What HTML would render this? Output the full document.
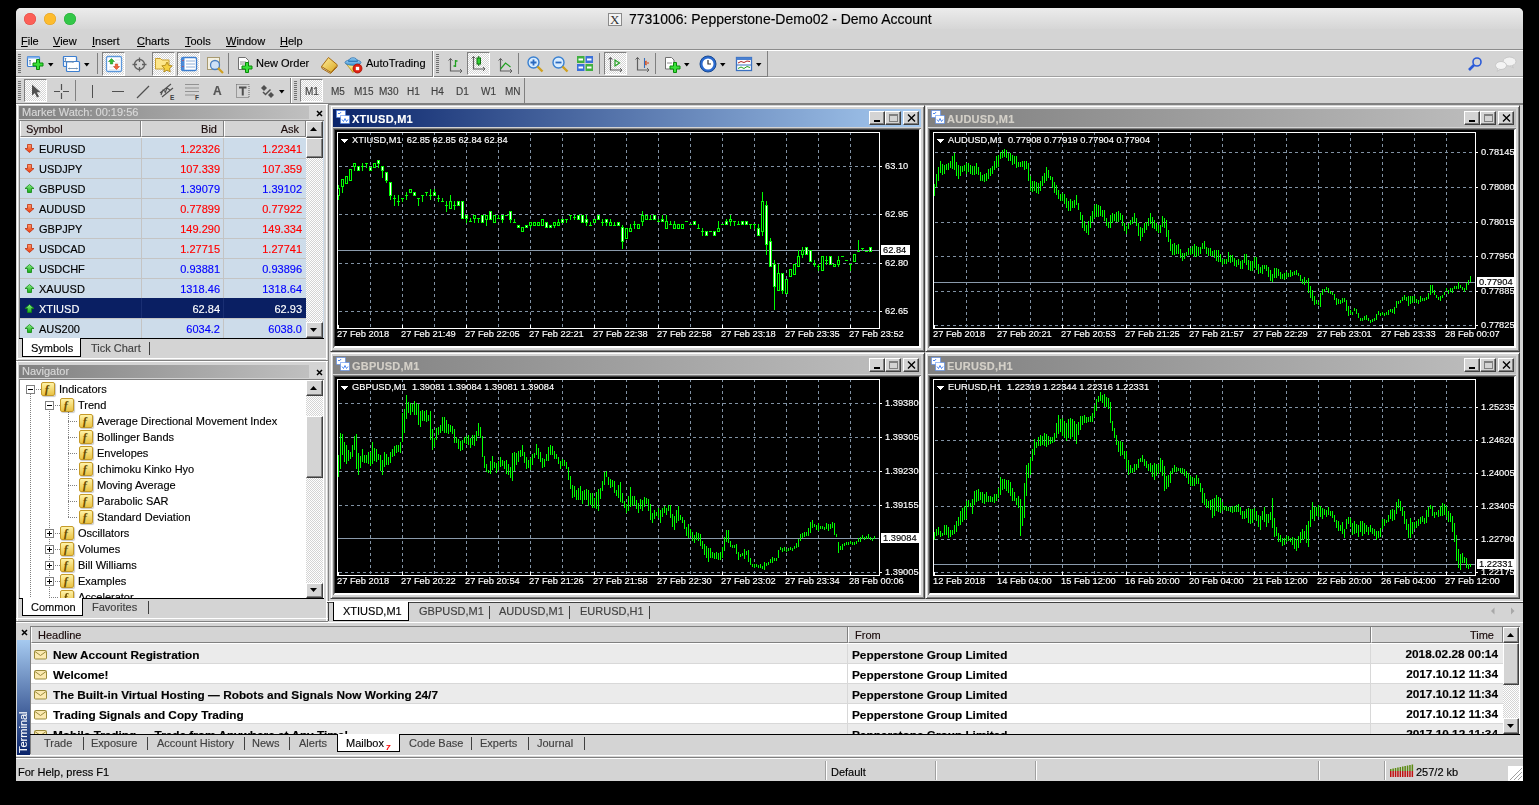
<!DOCTYPE html><html><head><meta charset="utf-8"><style>
*{margin:0;padding:0;box-sizing:border-box}
html,body{width:1539px;height:805px;overflow:hidden;background:#000}
body{position:relative;font-family:"Liberation Sans",sans-serif;font-size:11px;color:#000}
.t{position:absolute;white-space:nowrap;line-height:13px;will-change:transform;-webkit-text-stroke:0.15px currentColor}
.ct{position:absolute;white-space:nowrap;line-height:11px;font-size:9.3px;color:#fff;will-change:transform;-webkit-text-stroke:0.15px currentColor}
.u{text-decoration:underline}
svg{position:absolute;overflow:visible}
</style></head><body><div style="position:absolute;left:16px;top:8px;width:1507px;height:773px;background:#d4d4d4;border-radius:5px 5px 0 0"></div>
<div style="position:absolute;left:16px;top:8px;width:1507px;height:22px;background:linear-gradient(#ececec,#d6d6d6);border-radius:5px 5px 0 0;border-bottom:1px solid #ababab"></div>
<div style="position:absolute;left:24px;top:12.5px;width:12px;height:12px;background:#fc5f57;border-radius:50%;box-shadow:inset 0 0 0 0.5px #de4a42"></div>
<div style="position:absolute;left:44px;top:12.5px;width:12px;height:12px;background:#fdbc2e;border-radius:50%;box-shadow:inset 0 0 0 0.5px #de9f26"></div>
<div style="position:absolute;left:64px;top:12.5px;width:12px;height:12px;background:#33c748;border-radius:50%;box-shadow:inset 0 0 0 0.5px #27aa35"></div>
<div style="position:absolute;left:608px;top:13px;width:14px;height:13px;background:#f4f4f4;border:1px solid #8a8a8a"><div style="position:absolute;left:1px;top:-2px;font-family:Liberation Serif;font-size:13px;color:#333">X</div></div>
<div class="t" style="left:629px;top:10px;font-size:14px;line-height:18px;color:#000">7731006: Pepperstone-Demo02 - Demo Account</div>
<div style="position:absolute;left:16px;top:29px;width:1507px;height:20px;background:#d4d4d4"></div>
<div style="position:absolute;left:16px;top:49px;width:1507px;height:1px;background:#8c8c8c"></div>
<div style="position:absolute;left:16px;top:50px;width:1507px;height:1px;background:#fff"></div>
<div class="t" style="left:21px;top:35px;font-size:11px"><span class=u>F</span>ile</div>
<div class="t" style="left:53px;top:35px;font-size:11px"><span class=u>V</span>iew</div>
<div class="t" style="left:92px;top:35px;font-size:11px"><span class=u>I</span>nsert</div>
<div class="t" style="left:137px;top:35px;font-size:11px"><span class=u>C</span>harts</div>
<div class="t" style="left:185px;top:35px;font-size:11px"><span class=u>T</span>ools</div>
<div class="t" style="left:226px;top:35px;font-size:11px"><span class=u>W</span>indow</div>
<div class="t" style="left:280px;top:35px;font-size:11px"><span class=u>H</span>elp</div>
<div style="position:absolute;left:16px;top:76px;width:1507px;height:1px;background:#a0a0a0"></div>
<div style="position:absolute;left:16px;top:77px;width:1507px;height:1px;background:#fff"></div>
<div style="position:absolute;left:16px;top:103px;width:1507px;height:1px;background:#8c8c8c"></div>
<div style="position:absolute;left:16px;top:76px;width:752px;height:1px;background:#808080"></div>
<div style="position:absolute;left:16px;top:77px;width:753px;height:1px;background:#fff"></div>
<div style="position:absolute;left:432px;top:51px;width:1px;height:26px;background:#808080"></div>
<div style="position:absolute;left:433px;top:51px;width:1px;height:26px;background:#fff"></div>
<div style="position:absolute;left:767px;top:51px;width:1px;height:26px;background:#808080"></div>
<div style="position:absolute;left:16px;top:103px;width:1507px;height:1px;background:#808080"></div>
<div style="position:absolute;left:290px;top:78px;width:1px;height:25px;background:#808080"></div>
<div style="position:absolute;left:291px;top:78px;width:1px;height:25px;background:#fff"></div>
<div style="position:absolute;left:524px;top:78px;width:1px;height:25px;background:#808080"></div>
<div style="position:absolute;left:18px;top:54px;width:3px;height:19px;background-image:repeating-linear-gradient(#707070 0 1px,transparent 1px 2px)"></div>
<svg style="left:26px;top:55px" width="20" height="17" viewBox="0 0 20 17"><rect x="1.5" y="1.5" width="12" height="10" rx="1" fill="#fff" stroke="#3d7fd0" stroke-width="1.2"/><rect x="1.5" y="1.5" width="12" height="2" fill="#7fb0ee"/><path d="M4 5v5M3 6l1-1 1 1" stroke="#6a8cb0" fill="none"/><path d="M10.5 4.5h3v3.5h3.5v3h-3.5v3.5h-3v-3.5h-3.5v-3h3.5z" fill="#3ae03a" stroke="#0a8a0a" stroke-width="1" stroke-linejoin="miter"/></svg>
<svg style="left:48px;top:63px" width="6" height="4"><path d="M0 0H5.5L2.75 3.5Z" fill="#000"/></svg>
<svg style="left:62px;top:55px" width="20" height="18" viewBox="0 0 20 18"><rect x="1.5" y="1.5" width="13" height="10" rx="1" fill="#fff" stroke="#3d7fd0" stroke-width="1.2"/><rect x="4.5" y="6.5" width="13" height="10" rx="1" fill="#fff" stroke="#3d7fd0" stroke-width="1.2"/><rect x="1.5" y="1.5" width="13" height="5" rx="1" fill="#fff" stroke="#3d7fd0" stroke-width="1.2" stroke-dasharray="0"/><path d="M3.5 3v4M3 4l.5-1 .5 1M3.5 7h8M10.5 6.5l1 .5-1 .5M6.5 13.5h9M7.5 13l-1 .5 1 .5M14.5 13l1 .5-1 .5" stroke="#6a8cb0" fill="none" stroke-width="0.9"/></svg>
<svg style="left:84px;top:63px" width="6" height="4"><path d="M0 0H5.5L2.75 3.5Z" fill="#000"/></svg>
<div style="position:absolute;left:97px;top:53px;width:1px;height:21px;background:#808080"></div>
<div style="position:absolute;left:102px;top:52px;width:23px;height:24px;border-top:1px solid #808080;border-left:1px solid #808080;border-right:1px solid #fff;border-bottom:1px solid #fff;background-color:#eee;background-image:repeating-conic-gradient(#fff 0 25%,#d4d4d4 0 50%);background-size:2px 2px"></div>
<svg style="left:105px;top:55px" width="18" height="18" viewBox="0 0 18 18"><rect x="1.5" y="1.5" width="15" height="15" rx="1.5" fill="#fff" stroke="#5c98dc" stroke-width="1.3"/><path d="M10 5h5M10 8h5M4 12h11M4 14.5h11" stroke="#dde4ec" stroke-width="0.8"/><path d="M6.5 3.5l3 3h-1.8v2.5h-2.4v-2.5h-1.8z" fill="#30c030" stroke="#128012" stroke-width="0.5"/><path d="M11.5 14.5l3-3h-1.8v-2.5h-2.4v2.5h-1.8z" fill="#f06838" stroke="#c03010" stroke-width="0.5"/></svg>
<svg style="left:132px;top:57px" width="15" height="15" viewBox="0 0 15 15"><circle cx="7.5" cy="7.5" r="5" fill="none" stroke="#606060" stroke-width="1.3"/><path d="M7.5 0.5v4.5M7.5 10v4.5M0.5 7.5h4.5M10 7.5h4.5" stroke="#606060" stroke-width="1.3"/></svg>
<div style="position:absolute;left:152px;top:52px;width:23px;height:24px;border-top:1px solid #808080;border-left:1px solid #808080;border-right:1px solid #fff;border-bottom:1px solid #fff;background-color:#eee;background-image:repeating-conic-gradient(#fff 0 25%,#d4d4d4 0 50%);background-size:2px 2px"></div>
<svg style="left:154px;top:55px" width="20" height="19" viewBox="0 0 20 19"><path d="M1.5 3.5h5l1.5 1.5h7v9h-13.5z" fill="#fde68a" stroke="#c9a030"/><path d="M13 7l1.6 3.3 3.6.5-2.6 2.5.6 3.6-3.2-1.7-3.2 1.7.6-3.6-2.6-2.5 3.6-.5z" fill="#f5d040" stroke="#a88010" stroke-width="0.8"/></svg>
<div style="position:absolute;left:177px;top:52px;width:23px;height:24px;border-top:1px solid #808080;border-left:1px solid #808080;border-right:1px solid #fff;border-bottom:1px solid #fff;background-color:#eee;background-image:repeating-conic-gradient(#fff 0 25%,#d4d4d4 0 50%);background-size:2px 2px"></div>
<svg style="left:180px;top:56px" width="18" height="16" viewBox="0 0 18 16"><rect x="1.5" y="1.5" width="15" height="13" rx="1.5" fill="#fff" stroke="#3d7fd0" stroke-width="1.3"/><rect x="1.5" y="1.5" width="3" height="13" fill="#4a8ad8"/><path d="M6 5h9M6 8h9M6 11h9" stroke="#8fb0d8"/><path d="M3 4v1M3 10v1" stroke="#e03030"/></svg>
<svg style="left:206px;top:56px" width="19" height="19" viewBox="0 0 19 19"><rect x="1.5" y="1.5" width="12" height="12" fill="#f4f0e0" stroke="#a89a70"/><circle cx="9" cy="9" r="4.5" fill="#cfe2f6" stroke="#4a80c0" stroke-width="1.3"/><path d="M12 12l5 5" stroke="#d0a020" stroke-width="2.2"/></svg>
<div style="position:absolute;left:228px;top:53px;width:1px;height:21px;background:#808080"></div>
<svg style="left:237px;top:56px" width="19" height="19" viewBox="0 0 19 19"><path d="M1.5 1.5h7l3 3v9h-10z" fill="#fff" stroke="#707070"/><path d="M3 6h6M3 8h6" stroke="#909090"/><path d="M8.5 6.5h3v3.5h3.5v3h-3.5v3.5h-3v-3.5h-3.5v-3h3.5z" fill="#3ae03a" stroke="#0a8a0a" stroke-width="1" stroke-linejoin="miter"/></svg>
<div class="t" style="left:256px;top:57px;font-size:11px">New Order</div>
<svg style="left:320px;top:56px" width="19" height="18" viewBox="0 0 19 18"><defs><linearGradient id="bk" x1="0" y1="0" x2="1" y2="1"><stop offset="0" stop-color="#fff0a0"/><stop offset="1" stop-color="#d9a41c"/></linearGradient></defs><path d="M1.5 10.5L8.5 1.5L17.5 9L11 16.5Z" fill="url(#bk)" stroke="#a86c10"/><path d="M1.5 10.5L2 12.5L10.5 17.5L17.5 10.5" fill="none" stroke="#a86c10"/></svg>
<svg style="left:344px;top:55px" width="19" height="19" viewBox="0 0 19 19"><defs><linearGradient id="hat" x1="0" y1="0" x2="0" y2="1"><stop offset="0" stop-color="#a8d8f8"/><stop offset="1" stop-color="#3a90d0"/></linearGradient><linearGradient id="fun" x1="0" y1="0" x2="0" y2="1"><stop offset="0" stop-color="#fff4a0"/><stop offset="1" stop-color="#e8c030"/></linearGradient></defs><path d="M2 8.5L9 17.5L16 8.5Z" fill="url(#fun)" stroke="#b89020" stroke-width="0.8"/><ellipse cx="9" cy="7.5" rx="8" ry="2.8" fill="url(#hat)" stroke="#2a70b0" stroke-width="0.8"/><path d="M4.5 6.5C4.5 1.5 13.5 1.5 13.5 6.5Z" fill="url(#hat)" stroke="#2a70b0" stroke-width="0.8"/><circle cx="13.5" cy="13.5" r="4.5" fill="#e02010" stroke="#a01008" stroke-width="0.8"/><rect x="11.8" y="11.8" width="3.4" height="3.4" fill="#fff"/></svg>
<div class="t" style="left:366px;top:57px;font-size:11px">AutoTrading</div>
<div style="position:absolute;left:436px;top:54px;width:3px;height:19px;background-image:repeating-linear-gradient(#707070 0 1px,transparent 1px 2px)"></div>
<svg style="left:447px;top:57px" width="16" height="16" viewBox="0 0 16 16"><path d="M3.5 1.5v12.5h11.5" fill="none" stroke="#606060" stroke-width="1.2"/><path d="M1.5 3.5l2-2 2 2M13 12l2 2-2 2" fill="none" stroke="#606060"/><path d="M8.5 3v7M8.5 9h-2M8.5 4h2" stroke="#20a020" stroke-width="1.3"/></svg>
<div style="position:absolute;left:467px;top:52px;width:23px;height:23px;border-top:1px solid #808080;border-left:1px solid #808080;border-right:1px solid #fff;border-bottom:1px solid #fff;background-color:#eee;background-image:repeating-conic-gradient(#fff 0 25%,#d4d4d4 0 50%);background-size:2px 2px"></div>
<svg style="left:470px;top:55px" width="16" height="17" viewBox="0 0 16 17"><path d="M3.5 1.5v12.5h11.5" fill="none" stroke="#606060" stroke-width="1.2"/><path d="M1.5 3.5l2-2 2 2M13 12l2 2-2 2" fill="none" stroke="#606060"/><rect x="7" y="3" width="3.5" height="6" fill="#30d030" stroke="#107010"/><path d="M8.75 1v2M8.75 9v2" stroke="#107010"/></svg>
<svg style="left:497px;top:57px" width="16" height="16" viewBox="0 0 16 16"><path d="M3.5 1.5v12.5h11.5" fill="none" stroke="#606060" stroke-width="1.2"/><path d="M1.5 3.5l2-2 2 2M13 12l2 2-2 2" fill="none" stroke="#606060"/><path d="M3.5 12l5-6 5 4" fill="none" stroke="#20a020" stroke-width="1.2"/></svg>
<div style="position:absolute;left:518px;top:53px;width:1px;height:21px;background:#808080"></div>
<svg style="left:527px;top:56px" width="17" height="17" viewBox="0 0 17 17"><circle cx="6.5" cy="6.5" r="5.5" fill="#d8ecff" stroke="#3a80d0" stroke-width="1.4"/><path d="M10.5 10.5l5 5" stroke="#d0a020" stroke-width="2.4"/><path d="M3.5 6.5h6M6.5 3.5v6" stroke="#2a6ac0" stroke-width="1.8"/></svg>
<svg style="left:552px;top:56px" width="17" height="17" viewBox="0 0 17 17"><circle cx="6.5" cy="6.5" r="5.5" fill="#d8ecff" stroke="#3a80d0" stroke-width="1.4"/><path d="M10.5 10.5l5 5" stroke="#d0a020" stroke-width="2.4"/><path d="M3.5 6.5h6" stroke="#2a6ac0" stroke-width="1.8"/></svg>
<svg style="left:576px;top:55px" width="18" height="17" viewBox="0 0 18 17"><rect x="1" y="1" width="7.5" height="7" fill="#40b040"/><rect x="9.5" y="1" width="7.5" height="7" fill="#3a70d8"/><rect x="1" y="9" width="7.5" height="7" fill="#3a70d8"/><rect x="9.5" y="9" width="7.5" height="7" fill="#40b040"/><path d="M2.5 4.5h4.5M11 4.5h4.5M2.5 12.5h4.5M11 12.5h4.5" stroke="#fff" stroke-width="2"/></svg>
<div style="position:absolute;left:599px;top:53px;width:1px;height:21px;background:#808080"></div>
<div style="position:absolute;left:604px;top:52px;width:23px;height:23px;border-top:1px solid #808080;border-left:1px solid #808080;border-right:1px solid #fff;border-bottom:1px solid #fff;background-color:#eee;background-image:repeating-conic-gradient(#fff 0 25%,#d4d4d4 0 50%);background-size:2px 2px"></div>
<svg style="left:607px;top:56px" width="16" height="16" viewBox="0 0 16 16"><path d="M3.5 1.5v12.5h11.5" fill="none" stroke="#606060" stroke-width="1.2"/><path d="M1.5 3.5l2-2 2 2M13 12l2 2-2 2" fill="none" stroke="#606060"/><path d="M8 4v6l4.5-3z" fill="none" stroke="#20a020" stroke-width="1.2"/></svg>
<svg style="left:634px;top:56px" width="16" height="16" viewBox="0 0 16 16"><path d="M3.5 1.5v12.5h11.5" fill="none" stroke="#606060" stroke-width="1.2"/><path d="M1.5 3.5l2-2 2 2M13 12l2 2-2 2" fill="none" stroke="#606060"/><path d="M10.5 2v10M15 7h-3M12.5 5l-2 2 2 2" stroke="#d04010" fill="none" stroke-width="1.1"/><path d="M10.5 2v10" stroke="#3070c0"/></svg>
<div style="position:absolute;left:655px;top:53px;width:1px;height:21px;background:#808080"></div>
<svg style="left:664px;top:56px" width="19" height="19" viewBox="0 0 19 19"><path d="M1.5 1.5h6l2.5 2.5v9h-8.5z" fill="#fff" stroke="#707070"/><path d="M3 7h5" stroke="#909090"/><path d="M9.5 6.5h3v3.5h3.5v3h-3.5v3.5h-3v-3.5h-3.5v-3h3.5z" fill="#3ae03a" stroke="#0a8a0a" stroke-width="1" stroke-linejoin="miter"/></svg>
<svg style="left:684px;top:63px" width="6" height="4"><path d="M0 0H5.5L2.75 3.5Z" fill="#000"/></svg>
<svg style="left:699px;top:55px" width="18" height="18" viewBox="0 0 18 18"><circle cx="9" cy="9" r="8" fill="#2a6ad0" stroke="#1a4a90"/><circle cx="9" cy="9" r="5.5" fill="#fff"/><path d="M9 5v4h3" stroke="#333" fill="none" stroke-width="1.2"/></svg>
<svg style="left:720px;top:63px" width="6" height="4"><path d="M0 0H5.5L2.75 3.5Z" fill="#000"/></svg>
<svg style="left:735px;top:56px" width="18" height="16" viewBox="0 0 18 16"><rect x="1.5" y="1.5" width="15" height="13" fill="#fff" stroke="#3a70c0" stroke-width="1.3"/><rect x="1.5" y="1.5" width="15" height="2.5" fill="#4a80d0"/><path d="M1.5 9h15" stroke="#3a70c0"/><path d="M3 7l3-1.5 3 1 3-1.5 3 .5" stroke="#b02020" fill="none"/><path d="M3 12.5l3-1.5 3 1.5 3-2 3 1" stroke="#20a020" fill="none"/></svg>
<svg style="left:756px;top:63px" width="6" height="4"><path d="M0 0H5.5L2.75 3.5Z" fill="#000"/></svg>
<svg style="left:1467px;top:56px" width="16" height="16" viewBox="0 0 16 16"><circle cx="10" cy="6" r="4" fill="none" stroke="#2a5ad8" stroke-width="1.6"/><path d="M7 9l-5 5" stroke="#2a5ad8" stroke-width="2.6"/></svg>
<svg style="left:1494px;top:56px" width="24" height="16" viewBox="0 0 24 16"><ellipse cx="15.5" cy="5.5" rx="6.5" ry="4.5" fill="#f2f2f2" stroke="#c8c8c8"/><path d="M18 9.5l1.5 2.5-3.5-2" fill="#f2f2f2" stroke="#c8c8c8"/><ellipse cx="7" cy="9.5" rx="5.5" ry="4" fill="#f4f4f4" stroke="#c8c8c8"/><path d="M4 13l-1 2.5 3-2" fill="#f4f4f4" stroke="#c8c8c8"/></svg>
<div style="position:absolute;left:18px;top:81px;width:3px;height:19px;background-image:repeating-linear-gradient(#707070 0 1px,transparent 1px 2px)"></div>
<div style="position:absolute;left:24px;top:79px;width:23px;height:23px;border-top:1px solid #808080;border-left:1px solid #808080;border-right:1px solid #fff;border-bottom:1px solid #fff;background-color:#eee;background-image:repeating-conic-gradient(#fff 0 25%,#d4d4d4 0 50%);background-size:2px 2px"></div>
<svg style="left:30px;top:83px" width="12" height="16" viewBox="0 0 12 16"><path d="M2 1.5v11l2.8-2.5 2.2 4.5 2-1-2.2-4.3h3.8z" fill="#505050"/></svg>
<svg style="left:54px;top:84px" width="16" height="16" viewBox="0 0 16 16"><path d="M7.5 0v6M7.5 9v6M0 7.5h6M9 7.5h6" stroke="#505050" stroke-width="1.2"/></svg>
<div style="position:absolute;left:75px;top:80px;width:1px;height:21px;background:#808080"></div>
<div style="position:absolute;left:92px;top:85px;width:1px;height:13px;background:#505050"></div>
<div style="position:absolute;left:112px;top:91px;width:12px;height:1px;background:#505050"></div>
<svg style="left:136px;top:85px" width="14" height="14" viewBox="0 0 14 14"><path d="M1 13L13 1" stroke="#505050" stroke-width="1.2"/></svg>
<svg style="left:159px;top:83px" width="16" height="17" viewBox="0 0 16 17"><path d="M1 10L12 1M3 14L14 5M2 12l2-5 3 2M6 10l2-5 3 2" stroke="#505050" fill="none" stroke-width="1.1"/><text x="11" y="16.5" font-family="Liberation Sans" font-weight="bold" font-size="6.5" fill="#404040">E</text></svg>
<svg style="left:185px;top:83px" width="16" height="17" viewBox="0 0 16 17"><path d="M0.5 1.5h13M0.5 5h13M0.5 8.5h13M0.5 12h9" stroke="#505050" stroke-dasharray="1 1"/><text x="10" y="16.5" font-family="Liberation Sans" font-weight="bold" font-size="6.5" fill="#404040">F</text></svg>
<div class="t" style="left:213px;top:85px;font-size:12px;font-weight:bold;color:#555;line-height:12px">A</div>
<svg style="left:236px;top:84px" width="14" height="15" viewBox="0 0 14 15"><rect x="0.5" y="0.5" width="12.5" height="13" fill="none" stroke="#606060" stroke-dasharray="1 1"/><path d="M3 3.5h7.5M6.75 3.5v8" stroke="#505050" stroke-width="2"/></svg>
<svg style="left:260px;top:84px" width="16" height="15" viewBox="0 0 16 15"><path d="M4 1l3 3-3 3-3-3z" fill="#505050"/><path d="M11 8l3 3-3 3-3-3z" fill="#505050"/><path d="M3 8l2.5 2.5 5-5" stroke="#505050" fill="none" stroke-width="1.5"/></svg>
<svg style="left:279px;top:90px" width="6" height="4"><path d="M0 0H5.5L2.75 3.5Z" fill="#000"/></svg>
<div style="position:absolute;left:294px;top:81px;width:3px;height:19px;background-image:repeating-linear-gradient(#707070 0 1px,transparent 1px 2px)"></div>
<div style="position:absolute;left:300px;top:79px;width:23px;height:23px;border-top:1px solid #808080;border-left:1px solid #808080;border-right:1px solid #fff;border-bottom:1px solid #fff;background-color:#eee;background-image:repeating-conic-gradient(#fff 0 25%,#d4d4d4 0 50%);background-size:2px 2px"></div>
<div class="t" style="left:305px;top:85px;color:#404040;font-size:10px">M1</div>
<div class="t" style="left:331px;top:85px;color:#404040;font-size:10px">M5</div>
<div class="t" style="left:354px;top:85px;color:#404040;font-size:10px">M15</div>
<div class="t" style="left:379px;top:85px;color:#404040;font-size:10px">M30</div>
<div class="t" style="left:407px;top:85px;color:#404040;font-size:10px">H1</div>
<div class="t" style="left:431px;top:85px;color:#404040;font-size:10px">H4</div>
<div class="t" style="left:456px;top:85px;color:#404040;font-size:10px">D1</div>
<div class="t" style="left:481px;top:85px;color:#404040;font-size:10px">W1</div>
<div class="t" style="left:505px;top:85px;color:#404040;font-size:10px">MN</div>
<div style="position:absolute;left:17px;top:104px;width:1px;height:517px;background:#fff"></div>
<div style="position:absolute;left:16px;top:104px;width:312px;height:1px;background:#fff"></div>
<div style="position:absolute;left:326px;top:104px;width:1px;height:517px;background:#fff"></div>
<div style="position:absolute;left:19px;top:106px;width:290px;height:13px;background:linear-gradient(90deg,#808080,#c0c0c0)"></div>
<div class="t" style="left:22px;top:106px;color:#d8d8d8;font-size:11px;line-height:13px">Market Watch: 00:19:56</div>
<svg style="left:316px;top:110px" width="7" height="7"><path d="M1 1L6 6M6 1L1 6" stroke="#000" stroke-width="1.5"/></svg>
<div style="position:absolute;left:19px;top:120px;width:305px;height:218px;background:#cddcea;border-top:1px solid #808080;border-left:1px solid #808080"></div>
<div style="position:absolute;left:20px;top:121px;width:121px;height:16px;background:#d4d4d4;border-left:1px solid #fff;border-right:1px solid #808080;border-bottom:1px solid #808080"></div>
<div style="position:absolute;left:141px;top:121px;width:83px;height:16px;background:#d4d4d4;border-left:1px solid #fff;border-right:1px solid #808080;border-bottom:1px solid #808080"></div>
<div style="position:absolute;left:224px;top:121px;width:82px;height:16px;background:#d4d4d4;border-left:1px solid #fff;border-right:1px solid #808080;border-bottom:1px solid #808080"></div>
<div style="position:absolute;left:20px;top:137px;width:286px;height:1px;background:#fff"></div>
<div class="t" style="left:26px;top:123px;color:#1a0a0a">Symbol</div>
<div class="t" style="left:141px;top:123px;width:76px;text-align:right;color:#1a0a0a">Bid</div>
<div class="t" style="left:224px;top:123px;width:75px;text-align:right;color:#1a0a0a">Ask</div>
<div style="position:absolute;left:20px;top:158px;width:286px;height:1px;background:#c4c4c4"></div>
<div style="position:absolute;left:141px;top:138px;width:1px;height:20px;background:#c4c4c4"></div>
<div style="position:absolute;left:223px;top:138px;width:1px;height:20px;background:#c4c4c4"></div>
<div class="t" style="left:39px;top:143px;color:#000;font-size:11px">EURUSD</div>
<div class="t" style="left:141px;top:143px;width:79px;text-align:right;color:#ff0000">1.22326</div>
<div class="t" style="left:223px;top:143px;width:79px;text-align:right;color:#ff0000">1.22341</div>
<svg style="left:24px;top:144px" width="11" height="10"><defs><linearGradient id="ra0" x1="0" y1="0" x2="0" y2="1"><stop offset="0" stop-color="#ffa070"/><stop offset="1" stop-color="#e83a10"/></linearGradient></defs><path d="M5.5 8.5L10 4.5H7.5V0.5H3.5V4.5H1Z" fill="url(#ra0)" stroke="#c03010" stroke-width="0.8"/></svg>
<div style="position:absolute;left:20px;top:178px;width:286px;height:1px;background:#c4c4c4"></div>
<div style="position:absolute;left:141px;top:158px;width:1px;height:20px;background:#c4c4c4"></div>
<div style="position:absolute;left:223px;top:158px;width:1px;height:20px;background:#c4c4c4"></div>
<div class="t" style="left:39px;top:163px;color:#000;font-size:11px">USDJPY</div>
<div class="t" style="left:141px;top:163px;width:79px;text-align:right;color:#ff0000">107.339</div>
<div class="t" style="left:223px;top:163px;width:79px;text-align:right;color:#ff0000">107.359</div>
<svg style="left:24px;top:164px" width="11" height="10"><defs><linearGradient id="ra1" x1="0" y1="0" x2="0" y2="1"><stop offset="0" stop-color="#ffa070"/><stop offset="1" stop-color="#e83a10"/></linearGradient></defs><path d="M5.5 8.5L10 4.5H7.5V0.5H3.5V4.5H1Z" fill="url(#ra1)" stroke="#c03010" stroke-width="0.8"/></svg>
<div style="position:absolute;left:20px;top:198px;width:286px;height:1px;background:#c4c4c4"></div>
<div style="position:absolute;left:141px;top:178px;width:1px;height:20px;background:#c4c4c4"></div>
<div style="position:absolute;left:223px;top:178px;width:1px;height:20px;background:#c4c4c4"></div>
<div class="t" style="left:39px;top:183px;color:#000;font-size:11px">GBPUSD</div>
<div class="t" style="left:141px;top:183px;width:79px;text-align:right;color:#0000ff">1.39079</div>
<div class="t" style="left:223px;top:183px;width:79px;text-align:right;color:#0000ff">1.39102</div>
<svg style="left:24px;top:184px" width="11" height="10"><defs><linearGradient id="ga2" x1="0" y1="0" x2="0" y2="1"><stop offset="0" stop-color="#8cf08c"/><stop offset="1" stop-color="#18a818"/></linearGradient></defs><path d="M5.5 0.5L10 4.5H7.5V8.5H3.5V4.5H1Z" fill="url(#ga2)" stroke="#108a10" stroke-width="0.8"/></svg>
<div style="position:absolute;left:20px;top:218px;width:286px;height:1px;background:#c4c4c4"></div>
<div style="position:absolute;left:141px;top:198px;width:1px;height:20px;background:#c4c4c4"></div>
<div style="position:absolute;left:223px;top:198px;width:1px;height:20px;background:#c4c4c4"></div>
<div class="t" style="left:39px;top:203px;color:#000;font-size:11px">AUDUSD</div>
<div class="t" style="left:141px;top:203px;width:79px;text-align:right;color:#ff0000">0.77899</div>
<div class="t" style="left:223px;top:203px;width:79px;text-align:right;color:#ff0000">0.77922</div>
<svg style="left:24px;top:204px" width="11" height="10"><defs><linearGradient id="ra3" x1="0" y1="0" x2="0" y2="1"><stop offset="0" stop-color="#ffa070"/><stop offset="1" stop-color="#e83a10"/></linearGradient></defs><path d="M5.5 8.5L10 4.5H7.5V0.5H3.5V4.5H1Z" fill="url(#ra3)" stroke="#c03010" stroke-width="0.8"/></svg>
<div style="position:absolute;left:20px;top:238px;width:286px;height:1px;background:#c4c4c4"></div>
<div style="position:absolute;left:141px;top:218px;width:1px;height:20px;background:#c4c4c4"></div>
<div style="position:absolute;left:223px;top:218px;width:1px;height:20px;background:#c4c4c4"></div>
<div class="t" style="left:39px;top:223px;color:#000;font-size:11px">GBPJPY</div>
<div class="t" style="left:141px;top:223px;width:79px;text-align:right;color:#ff0000">149.290</div>
<div class="t" style="left:223px;top:223px;width:79px;text-align:right;color:#ff0000">149.334</div>
<svg style="left:24px;top:224px" width="11" height="10"><defs><linearGradient id="ra4" x1="0" y1="0" x2="0" y2="1"><stop offset="0" stop-color="#ffa070"/><stop offset="1" stop-color="#e83a10"/></linearGradient></defs><path d="M5.5 8.5L10 4.5H7.5V0.5H3.5V4.5H1Z" fill="url(#ra4)" stroke="#c03010" stroke-width="0.8"/></svg>
<div style="position:absolute;left:20px;top:258px;width:286px;height:1px;background:#c4c4c4"></div>
<div style="position:absolute;left:141px;top:238px;width:1px;height:20px;background:#c4c4c4"></div>
<div style="position:absolute;left:223px;top:238px;width:1px;height:20px;background:#c4c4c4"></div>
<div class="t" style="left:39px;top:243px;color:#000;font-size:11px">USDCAD</div>
<div class="t" style="left:141px;top:243px;width:79px;text-align:right;color:#ff0000">1.27715</div>
<div class="t" style="left:223px;top:243px;width:79px;text-align:right;color:#ff0000">1.27741</div>
<svg style="left:24px;top:244px" width="11" height="10"><defs><linearGradient id="ra5" x1="0" y1="0" x2="0" y2="1"><stop offset="0" stop-color="#ffa070"/><stop offset="1" stop-color="#e83a10"/></linearGradient></defs><path d="M5.5 8.5L10 4.5H7.5V0.5H3.5V4.5H1Z" fill="url(#ra5)" stroke="#c03010" stroke-width="0.8"/></svg>
<div style="position:absolute;left:20px;top:278px;width:286px;height:1px;background:#c4c4c4"></div>
<div style="position:absolute;left:141px;top:258px;width:1px;height:20px;background:#c4c4c4"></div>
<div style="position:absolute;left:223px;top:258px;width:1px;height:20px;background:#c4c4c4"></div>
<div class="t" style="left:39px;top:263px;color:#000;font-size:11px">USDCHF</div>
<div class="t" style="left:141px;top:263px;width:79px;text-align:right;color:#0000ff">0.93881</div>
<div class="t" style="left:223px;top:263px;width:79px;text-align:right;color:#0000ff">0.93896</div>
<svg style="left:24px;top:264px" width="11" height="10"><defs><linearGradient id="ga6" x1="0" y1="0" x2="0" y2="1"><stop offset="0" stop-color="#8cf08c"/><stop offset="1" stop-color="#18a818"/></linearGradient></defs><path d="M5.5 0.5L10 4.5H7.5V8.5H3.5V4.5H1Z" fill="url(#ga6)" stroke="#108a10" stroke-width="0.8"/></svg>
<div style="position:absolute;left:20px;top:298px;width:286px;height:1px;background:#c4c4c4"></div>
<div style="position:absolute;left:141px;top:278px;width:1px;height:20px;background:#c4c4c4"></div>
<div style="position:absolute;left:223px;top:278px;width:1px;height:20px;background:#c4c4c4"></div>
<div class="t" style="left:39px;top:283px;color:#000;font-size:11px">XAUUSD</div>
<div class="t" style="left:141px;top:283px;width:79px;text-align:right;color:#0000ff">1318.46</div>
<div class="t" style="left:223px;top:283px;width:79px;text-align:right;color:#0000ff">1318.64</div>
<svg style="left:24px;top:284px" width="11" height="10"><defs><linearGradient id="ga7" x1="0" y1="0" x2="0" y2="1"><stop offset="0" stop-color="#8cf08c"/><stop offset="1" stop-color="#18a818"/></linearGradient></defs><path d="M5.5 0.5L10 4.5H7.5V8.5H3.5V4.5H1Z" fill="url(#ga7)" stroke="#108a10" stroke-width="0.8"/></svg>
<div style="position:absolute;left:20px;top:298px;width:286px;height:20px;background:#0a1f63"></div>
<div style="position:absolute;left:20px;top:318px;width:286px;height:1px;background:#c4c4c4"></div>
<div style="position:absolute;left:141px;top:298px;width:1px;height:20px;background:#1a2f73"></div>
<div style="position:absolute;left:223px;top:298px;width:1px;height:20px;background:#1a2f73"></div>
<div class="t" style="left:39px;top:303px;color:#fff;font-size:11px">XTIUSD</div>
<div class="t" style="left:141px;top:303px;width:79px;text-align:right;color:#fff">62.84</div>
<div class="t" style="left:223px;top:303px;width:79px;text-align:right;color:#fff">62.93</div>
<svg style="left:24px;top:304px" width="11" height="10"><defs><linearGradient id="ga8" x1="0" y1="0" x2="0" y2="1"><stop offset="0" stop-color="#8cf08c"/><stop offset="1" stop-color="#18a818"/></linearGradient></defs><path d="M5.5 0.5L10 4.5H7.5V8.5H3.5V4.5H1Z" fill="url(#ga8)" stroke="#108a10" stroke-width="0.8"/></svg>
<div style="position:absolute;left:20px;top:338px;width:286px;height:1px;background:#c4c4c4"></div>
<div style="position:absolute;left:141px;top:318px;width:1px;height:20px;background:#c4c4c4"></div>
<div style="position:absolute;left:223px;top:318px;width:1px;height:20px;background:#c4c4c4"></div>
<div class="t" style="left:39px;top:323px;color:#000;font-size:11px">AUS200</div>
<div class="t" style="left:141px;top:323px;width:79px;text-align:right;color:#0000ff">6034.2</div>
<div class="t" style="left:223px;top:323px;width:79px;text-align:right;color:#0000ff">6038.0</div>
<svg style="left:24px;top:324px" width="11" height="10"><defs><linearGradient id="ga9" x1="0" y1="0" x2="0" y2="1"><stop offset="0" stop-color="#8cf08c"/><stop offset="1" stop-color="#18a818"/></linearGradient></defs><path d="M5.5 0.5L10 4.5H7.5V8.5H3.5V4.5H1Z" fill="url(#ga9)" stroke="#108a10" stroke-width="0.8"/></svg>
<div style="position:absolute;left:306px;top:121px;width:17px;height:217px;background-color:#e8e8e8;background-image:repeating-conic-gradient(#fff 0 25%,#d4d4d4 0 50%);background-size:2px 2px"></div>
<div style="position:absolute;left:306px;top:121px;width:17px;height:17px;background:#d4d4d4;border-top:1px solid #fff;border-left:1px solid #fff;border-right:1px solid #404040;border-bottom:1px solid #404040;box-shadow:inset -1px -1px 0 #808080"></div>
<svg style="left:310px;top:127px" width="8" height="5"><path d="M3.5 0L7 4H0Z" fill="#000"/></svg>
<div style="position:absolute;left:306px;top:138px;width:17px;height:20px;background:#d4d4d4;border-top:1px solid #fff;border-left:1px solid #fff;border-right:1px solid #404040;border-bottom:1px solid #404040;box-shadow:inset -1px -1px 0 #808080"></div>
<div style="position:absolute;left:306px;top:322px;width:17px;height:16px;background:#d4d4d4;border-top:1px solid #fff;border-left:1px solid #fff;border-right:1px solid #404040;border-bottom:1px solid #404040;box-shadow:inset -1px -1px 0 #808080"></div>
<svg style="left:310px;top:328px" width="8" height="5"><path d="M0 0H7L3.5 4Z" fill="#000"/></svg>
<div style="position:absolute;left:19px;top:338px;width:305px;height:1px;background:#000"></div>
<div style="position:absolute;left:22px;top:338px;width:59px;height:19px;background:#fff;border:1px solid #000;border-top:none"></div>
<div class="t" style="left:31px;top:342px;">Symbols</div>
<div class="t" style="left:91px;top:342px;color:#404040">Tick Chart</div>
<div style="position:absolute;left:149px;top:342px;width:1px;height:13px;background:#404040"></div>
<div style="position:absolute;left:17px;top:358px;width:310px;height:1px;background:#fff"></div>
<div style="position:absolute;left:16px;top:360px;width:312px;height:1px;background:#808080"></div>
<div style="position:absolute;left:16px;top:361px;width:312px;height:1px;background:#fff"></div>
<div style="position:absolute;left:19px;top:365px;width:290px;height:13px;background:linear-gradient(90deg,#808080,#c0c0c0)"></div>
<div class="t" style="left:22px;top:365px;color:#d8d8d8;font-size:11px;line-height:13px">Navigator</div>
<svg style="left:316px;top:369px" width="7" height="7"><path d="M1 1L6 6M6 1L1 6" stroke="#000" stroke-width="1.5"/></svg>
<div style="position:absolute;left:19px;top:379px;width:305px;height:219px;background:#fff;border-top:1px solid #808080;border-left:1px solid #808080"></div>
<div style="position:absolute;left:30px;top:394px;width:1px;height:204px;background-image:repeating-linear-gradient(#808080 0 1px,transparent 1px 2px)"></div>
<div style="position:absolute;left:49px;top:411px;width:1px;height:187px;background-image:repeating-linear-gradient(#808080 0 1px,transparent 1px 2px)"></div>
<div style="position:absolute;left:68px;top:412px;width:1px;height:105px;background-image:repeating-linear-gradient(#808080 0 1px,transparent 1px 2px)"></div>
<div style="position:absolute;left:26px;top:385px;width:9px;height:9px;border:1px solid #808080;background:#fff"><div style="position:absolute;left:1px;top:3px;width:5px;height:1px;background:#000"></div></div>
<div style="position:absolute;left:36px;top:389px;width:5px;height:1px;background-image:repeating-linear-gradient(90deg,#808080 0 1px,transparent 1px 2px)"></div>
<div style="position:absolute;left:41px;top:382px;width:14px;height:14px;border-radius:2px;background:linear-gradient(#fff3a8,#e9c244);border:1px solid #c59a28;box-shadow:1px 1px 1px rgba(0,0,0,.22)"><div style="position:absolute;left:2px;top:-1px;font-family:Liberation Serif;font-style:italic;font-weight:bold;font-size:12px;line-height:14px;color:#6e5000">&#402;</div></div>
<div class="t" style="left:59px;top:383px;">Indicators</div>
<div style="position:absolute;left:45px;top:401px;width:9px;height:9px;border:1px solid #808080;background:#fff"><div style="position:absolute;left:1px;top:3px;width:5px;height:1px;background:#000"></div></div>
<div style="position:absolute;left:55px;top:405px;width:5px;height:1px;background-image:repeating-linear-gradient(90deg,#808080 0 1px,transparent 1px 2px)"></div>
<div style="position:absolute;left:60px;top:398px;width:14px;height:14px;border-radius:2px;background:linear-gradient(#fff3a8,#e9c244);border:1px solid #c59a28;box-shadow:1px 1px 1px rgba(0,0,0,.22)"><div style="position:absolute;left:2px;top:-1px;font-family:Liberation Serif;font-style:italic;font-weight:bold;font-size:12px;line-height:14px;color:#6e5000">&#402;</div></div>
<div class="t" style="left:78px;top:399px;">Trend</div>
<div style="position:absolute;left:68px;top:421px;width:10px;height:1px;background-image:repeating-linear-gradient(90deg,#808080 0 1px,transparent 1px 2px)"></div>
<div style="position:absolute;left:79px;top:414px;width:14px;height:14px;border-radius:2px;background:linear-gradient(#fff3a8,#e9c244);border:1px solid #c59a28;box-shadow:1px 1px 1px rgba(0,0,0,.22)"><div style="position:absolute;left:2px;top:-1px;font-family:Liberation Serif;font-style:italic;font-weight:bold;font-size:12px;line-height:14px;color:#6e5000">&#402;</div></div>
<div class="t" style="left:97px;top:415px;">Average Directional Movement Index</div>
<div style="position:absolute;left:68px;top:437px;width:10px;height:1px;background-image:repeating-linear-gradient(90deg,#808080 0 1px,transparent 1px 2px)"></div>
<div style="position:absolute;left:79px;top:430px;width:14px;height:14px;border-radius:2px;background:linear-gradient(#fff3a8,#e9c244);border:1px solid #c59a28;box-shadow:1px 1px 1px rgba(0,0,0,.22)"><div style="position:absolute;left:2px;top:-1px;font-family:Liberation Serif;font-style:italic;font-weight:bold;font-size:12px;line-height:14px;color:#6e5000">&#402;</div></div>
<div class="t" style="left:97px;top:431px;">Bollinger Bands</div>
<div style="position:absolute;left:68px;top:453px;width:10px;height:1px;background-image:repeating-linear-gradient(90deg,#808080 0 1px,transparent 1px 2px)"></div>
<div style="position:absolute;left:79px;top:446px;width:14px;height:14px;border-radius:2px;background:linear-gradient(#fff3a8,#e9c244);border:1px solid #c59a28;box-shadow:1px 1px 1px rgba(0,0,0,.22)"><div style="position:absolute;left:2px;top:-1px;font-family:Liberation Serif;font-style:italic;font-weight:bold;font-size:12px;line-height:14px;color:#6e5000">&#402;</div></div>
<div class="t" style="left:97px;top:447px;">Envelopes</div>
<div style="position:absolute;left:68px;top:469px;width:10px;height:1px;background-image:repeating-linear-gradient(90deg,#808080 0 1px,transparent 1px 2px)"></div>
<div style="position:absolute;left:79px;top:462px;width:14px;height:14px;border-radius:2px;background:linear-gradient(#fff3a8,#e9c244);border:1px solid #c59a28;box-shadow:1px 1px 1px rgba(0,0,0,.22)"><div style="position:absolute;left:2px;top:-1px;font-family:Liberation Serif;font-style:italic;font-weight:bold;font-size:12px;line-height:14px;color:#6e5000">&#402;</div></div>
<div class="t" style="left:97px;top:463px;">Ichimoku Kinko Hyo</div>
<div style="position:absolute;left:68px;top:485px;width:10px;height:1px;background-image:repeating-linear-gradient(90deg,#808080 0 1px,transparent 1px 2px)"></div>
<div style="position:absolute;left:79px;top:478px;width:14px;height:14px;border-radius:2px;background:linear-gradient(#fff3a8,#e9c244);border:1px solid #c59a28;box-shadow:1px 1px 1px rgba(0,0,0,.22)"><div style="position:absolute;left:2px;top:-1px;font-family:Liberation Serif;font-style:italic;font-weight:bold;font-size:12px;line-height:14px;color:#6e5000">&#402;</div></div>
<div class="t" style="left:97px;top:479px;">Moving Average</div>
<div style="position:absolute;left:68px;top:501px;width:10px;height:1px;background-image:repeating-linear-gradient(90deg,#808080 0 1px,transparent 1px 2px)"></div>
<div style="position:absolute;left:79px;top:494px;width:14px;height:14px;border-radius:2px;background:linear-gradient(#fff3a8,#e9c244);border:1px solid #c59a28;box-shadow:1px 1px 1px rgba(0,0,0,.22)"><div style="position:absolute;left:2px;top:-1px;font-family:Liberation Serif;font-style:italic;font-weight:bold;font-size:12px;line-height:14px;color:#6e5000">&#402;</div></div>
<div class="t" style="left:97px;top:495px;">Parabolic SAR</div>
<div style="position:absolute;left:68px;top:517px;width:10px;height:1px;background-image:repeating-linear-gradient(90deg,#808080 0 1px,transparent 1px 2px)"></div>
<div style="position:absolute;left:79px;top:510px;width:14px;height:14px;border-radius:2px;background:linear-gradient(#fff3a8,#e9c244);border:1px solid #c59a28;box-shadow:1px 1px 1px rgba(0,0,0,.22)"><div style="position:absolute;left:2px;top:-1px;font-family:Liberation Serif;font-style:italic;font-weight:bold;font-size:12px;line-height:14px;color:#6e5000">&#402;</div></div>
<div class="t" style="left:97px;top:511px;">Standard Deviation</div>
<div style="position:absolute;left:45px;top:529px;width:9px;height:9px;border:1px solid #808080;background:#fff"><div style="position:absolute;left:1px;top:3px;width:5px;height:1px;background:#000"></div><div style="position:absolute;left:3px;top:1px;width:1px;height:5px;background:#000"></div></div>
<div style="position:absolute;left:55px;top:533px;width:5px;height:1px;background-image:repeating-linear-gradient(90deg,#808080 0 1px,transparent 1px 2px)"></div>
<div style="position:absolute;left:60px;top:526px;width:14px;height:14px;border-radius:2px;background:linear-gradient(#fff3a8,#e9c244);border:1px solid #c59a28;box-shadow:1px 1px 1px rgba(0,0,0,.22)"><div style="position:absolute;left:2px;top:-1px;font-family:Liberation Serif;font-style:italic;font-weight:bold;font-size:12px;line-height:14px;color:#6e5000">&#402;</div></div>
<div class="t" style="left:78px;top:527px;">Oscillators</div>
<div style="position:absolute;left:45px;top:545px;width:9px;height:9px;border:1px solid #808080;background:#fff"><div style="position:absolute;left:1px;top:3px;width:5px;height:1px;background:#000"></div><div style="position:absolute;left:3px;top:1px;width:1px;height:5px;background:#000"></div></div>
<div style="position:absolute;left:55px;top:549px;width:5px;height:1px;background-image:repeating-linear-gradient(90deg,#808080 0 1px,transparent 1px 2px)"></div>
<div style="position:absolute;left:60px;top:542px;width:14px;height:14px;border-radius:2px;background:linear-gradient(#fff3a8,#e9c244);border:1px solid #c59a28;box-shadow:1px 1px 1px rgba(0,0,0,.22)"><div style="position:absolute;left:2px;top:-1px;font-family:Liberation Serif;font-style:italic;font-weight:bold;font-size:12px;line-height:14px;color:#6e5000">&#402;</div></div>
<div class="t" style="left:78px;top:543px;">Volumes</div>
<div style="position:absolute;left:45px;top:561px;width:9px;height:9px;border:1px solid #808080;background:#fff"><div style="position:absolute;left:1px;top:3px;width:5px;height:1px;background:#000"></div><div style="position:absolute;left:3px;top:1px;width:1px;height:5px;background:#000"></div></div>
<div style="position:absolute;left:55px;top:565px;width:5px;height:1px;background-image:repeating-linear-gradient(90deg,#808080 0 1px,transparent 1px 2px)"></div>
<div style="position:absolute;left:60px;top:558px;width:14px;height:14px;border-radius:2px;background:linear-gradient(#fff3a8,#e9c244);border:1px solid #c59a28;box-shadow:1px 1px 1px rgba(0,0,0,.22)"><div style="position:absolute;left:2px;top:-1px;font-family:Liberation Serif;font-style:italic;font-weight:bold;font-size:12px;line-height:14px;color:#6e5000">&#402;</div></div>
<div class="t" style="left:78px;top:559px;">Bill Williams</div>
<div style="position:absolute;left:45px;top:577px;width:9px;height:9px;border:1px solid #808080;background:#fff"><div style="position:absolute;left:1px;top:3px;width:5px;height:1px;background:#000"></div><div style="position:absolute;left:3px;top:1px;width:1px;height:5px;background:#000"></div></div>
<div style="position:absolute;left:55px;top:581px;width:5px;height:1px;background-image:repeating-linear-gradient(90deg,#808080 0 1px,transparent 1px 2px)"></div>
<div style="position:absolute;left:60px;top:574px;width:14px;height:14px;border-radius:2px;background:linear-gradient(#fff3a8,#e9c244);border:1px solid #c59a28;box-shadow:1px 1px 1px rgba(0,0,0,.22)"><div style="position:absolute;left:2px;top:-1px;font-family:Liberation Serif;font-style:italic;font-weight:bold;font-size:12px;line-height:14px;color:#6e5000">&#402;</div></div>
<div class="t" style="left:78px;top:575px;">Examples</div>
<div style="position:absolute;left:0;top:0;width:330px;height:598px;overflow:hidden">
<div style="position:absolute;left:49px;top:597px;width:10px;height:1px;background-image:repeating-linear-gradient(90deg,#808080 0 1px,transparent 1px 2px)"></div>
<div style="position:absolute;left:60px;top:590px;width:14px;height:14px;border-radius:2px;background:linear-gradient(#fff3a8,#e9c244);border:1px solid #c59a28;box-shadow:1px 1px 1px rgba(0,0,0,.22)"><div style="position:absolute;left:2px;top:-1px;font-family:Liberation Serif;font-style:italic;font-weight:bold;font-size:12px;line-height:14px;color:#6e5000">&#402;</div></div>
<div class="t" style="left:78px;top:591px;">Accelerator</div>
</div>
<div style="position:absolute;left:19px;top:598px;width:305px;height:1px;background:#000"></div>
<div style="position:absolute;left:306px;top:380px;width:17px;height:218px;background-color:#e8e8e8;background-image:repeating-conic-gradient(#fff 0 25%,#d4d4d4 0 50%);background-size:2px 2px"></div>
<div style="position:absolute;left:306px;top:380px;width:17px;height:16px;background:#d4d4d4;border-top:1px solid #fff;border-left:1px solid #fff;border-right:1px solid #404040;border-bottom:1px solid #404040;box-shadow:inset -1px -1px 0 #808080"></div>
<svg style="left:310px;top:386px" width="8" height="5"><path d="M3.5 0L7 4H0Z" fill="#000"/></svg>
<div style="position:absolute;left:306px;top:416px;width:17px;height:62px;background:#d4d4d4;border-top:1px solid #fff;border-left:1px solid #fff;border-right:1px solid #404040;border-bottom:1px solid #404040;box-shadow:inset -1px -1px 0 #808080"></div>
<div style="position:absolute;left:306px;top:583px;width:17px;height:15px;background:#d4d4d4;border-top:1px solid #fff;border-left:1px solid #fff;border-right:1px solid #404040;border-bottom:1px solid #404040;box-shadow:inset -1px -1px 0 #808080"></div>
<svg style="left:310px;top:588px" width="8" height="5"><path d="M0 0H7L3.5 4Z" fill="#000"/></svg>
<div style="position:absolute;left:22px;top:598px;width:61px;height:18px;background:#fff;border:1px solid #000;border-top:none"></div>
<div class="t" style="left:31px;top:601px;">Common</div>
<div class="t" style="left:92px;top:601px;color:#404040">Favorites</div>
<div style="position:absolute;left:148px;top:601px;width:1px;height:13px;background:#404040"></div>
<div style="position:absolute;left:17px;top:618px;width:310px;height:1px;background:#fff"></div>
<div style="position:absolute;left:328px;top:104px;width:1195px;height:497px;background:#d4d4d4"></div>
<div style="position:absolute;left:328px;top:104px;width:1px;height:497px;background:#808080"></div>
<div style="position:absolute;left:328px;top:104px;width:1195px;height:1px;background:#808080"></div>
<div style="position:absolute;left:330px;top:105px;width:595px;height:247px;background:#d4d4d4;border-top:1px solid #d4d4d4;border-left:1px solid #d4d4d4;border-right:1px solid #404040;border-bottom:1px solid #404040;box-shadow:inset 1px 1px 0 #fff,inset -1px -1px 0 #808080"></div>
<div style="position:absolute;left:333px;top:109px;width:588px;height:18px;background:linear-gradient(90deg,#0a246a,#a6caf0)"></div>
<svg style="left:336px;top:110px" width="15" height="15"><rect x="0.5" y="0.5" width="9" height="7" fill="#fff" stroke="#3a7af0" stroke-dasharray="1 1"/><rect x="4.5" y="5.5" width="9" height="8" fill="#fff" stroke="#3a7af0" stroke-dasharray="1 1"/><path d="M6 9.5l1.5 2 1.5-3 1.5 3 1.5-2" stroke="#3a7af0" fill="none" stroke-width="0.9"/><path d="M2 3.5h2l1-1.5" stroke="#3a7af0" fill="none" stroke-width="0.9"/></svg>
<div class="t" style="left:352px;top:111px;font-weight:bold;font-size:11px;letter-spacing:0.25px;line-height:16px;color:#fff">XTIUSD,M1</div>
<div style="position:absolute;left:869px;top:111px;width:16px;height:14px;background:#d4d4d4;border-top:1px solid #fff;border-left:1px solid #fff;border-right:1px solid #404040;border-bottom:1px solid #404040;box-shadow:inset -1px -1px 0 #808080"><div style="position:absolute;left:4px;top:8px;width:6px;height:2px;background:#000"></div></div>
<div style="position:absolute;left:885px;top:111px;width:16px;height:14px;background:#d4d4d4;border-top:1px solid #fff;border-left:1px solid #fff;border-right:1px solid #404040;border-bottom:1px solid #404040;box-shadow:inset -1px -1px 0 #808080"><div style="position:absolute;left:3px;top:2px;width:9px;height:8px;border:1px solid #808080;border-top-width:2px"></div></div>
<div style="position:absolute;left:903px;top:111px;width:16px;height:14px;background:#d4d4d4;border-top:1px solid #fff;border-left:1px solid #fff;border-right:1px solid #404040;border-bottom:1px solid #404040;box-shadow:inset -1px -1px 0 #808080"><svg style="left:3px;top:2px" width="9" height="8"><path d="M1 0.5L8 7.5M8 0.5L1 7.5" stroke="#000" stroke-width="1.4"/></svg></div>
<div style="position:absolute;left:333px;top:128px;width:588px;height:220px;background:#000;border-top:2px solid #404040;border-left:2px solid #404040;border-right:2px solid #fff;border-bottom:2px solid #fff"></div>
<div style="position:absolute;left:333px;top:128px;width:588px;height:1px;background:#808080"></div>
<div style="position:absolute;left:333px;top:128px;width:1px;height:220px;background:#808080"></div>
<svg style="left:333px;top:128px" width="588" height="220" viewBox="0 0 588 220" shape-rendering="crispEdges"><path d="M6 38.5H546" stroke="#8192a4" stroke-dasharray="3 3"/><path d="M6 86.5H546" stroke="#8192a4" stroke-dasharray="3 3"/><path d="M6 135.5H546" stroke="#8192a4" stroke-dasharray="3 3"/><path d="M6 183.5H546" stroke="#8192a4" stroke-dasharray="3 3"/><path d="M37.5 4V200" stroke="#8192a4" stroke-dasharray="3 3"/><path d="M69.5 4V200" stroke="#8192a4" stroke-dasharray="3 3"/><path d="M101.5 4V200" stroke="#8192a4" stroke-dasharray="3 3"/><path d="M133.5 4V200" stroke="#8192a4" stroke-dasharray="3 3"/><path d="M165.5 4V200" stroke="#8192a4" stroke-dasharray="3 3"/><path d="M197.5 4V200" stroke="#8192a4" stroke-dasharray="3 3"/><path d="M229.5 4V200" stroke="#8192a4" stroke-dasharray="3 3"/><path d="M261.5 4V200" stroke="#8192a4" stroke-dasharray="3 3"/><path d="M293.5 4V200" stroke="#8192a4" stroke-dasharray="3 3"/><path d="M325.5 4V200" stroke="#8192a4" stroke-dasharray="3 3"/><path d="M357.5 4V200" stroke="#8192a4" stroke-dasharray="3 3"/><path d="M389.5 4V200" stroke="#8192a4" stroke-dasharray="3 3"/><path d="M421.5 4V200" stroke="#8192a4" stroke-dasharray="3 3"/><path d="M453.5 4V200" stroke="#8192a4" stroke-dasharray="3 3"/><path d="M485.5 4V200" stroke="#8192a4" stroke-dasharray="3 3"/><path d="M517.5 4V200" stroke="#8192a4" stroke-dasharray="3 3"/><path d="M5 122.5H546" stroke="#8a9aab"/><path d="M5.5 57V60" stroke="#00ff00"/><path d="M5.5 67V72" stroke="#00ff00"/><rect x="4.5" y="60.5" width="2" height="7" fill="#000" stroke="#00ff00"/><path d="M9.5 58V65" stroke="#00ff00"/><rect x="8.5" y="51.5" width="2" height="7" fill="#000" stroke="#00ff00"/><rect x="12.5" y="48.5" width="2" height="7" fill="#000" stroke="#00ff00"/><rect x="16.5" y="41.5" width="2" height="11" fill="#000" stroke="#00ff00"/><path d="M21.5 38V43" stroke="#00ff00"/><rect x="20.5" y="35.5" width="2" height="3" fill="#000" stroke="#00ff00"/><rect x="24.5" y="38.5" width="2" height="4" fill="#fff" stroke="#00ff00"/><path d="M29.5 35V43" stroke="#00ff00"/><path d="M28 38.5h3" stroke="#00ff00"/><path d="M33.5 35V40" stroke="#00ff00"/><path d="M32 35.5h3" stroke="#00ff00"/><rect x="36.5" y="39.5" width="2" height="3" fill="#fff" stroke="#00ff00"/><rect x="40.5" y="35.5" width="2" height="4" fill="#000" stroke="#00ff00"/><path d="M45.5 35V40" stroke="#00ff00"/><rect x="44.5" y="32.5" width="2" height="3" fill="#fff" stroke="#00ff00"/><path d="M49.5 42V50" stroke="#00ff00"/><rect x="48.5" y="38.5" width="2" height="4" fill="#fff" stroke="#00ff00"/><path d="M53.5 52V55" stroke="#00ff00"/><rect x="52.5" y="44.5" width="2" height="8" fill="#fff" stroke="#00ff00"/><path d="M57.5 67V72" stroke="#00ff00"/><rect x="56.5" y="54.5" width="2" height="13" fill="#fff" stroke="#00ff00"/><path d="M61.5 67V78" stroke="#00ff00"/><path d="M60 70.5h3" stroke="#00ff00"/><path d="M65.5 67V78" stroke="#00ff00"/><path d="M64 73.5h3" stroke="#00ff00"/><path d="M69.5 70V74" stroke="#00ff00"/><path d="M68 70.5h3" stroke="#00ff00"/><path d="M73.5 64V72" stroke="#00ff00"/><path d="M72 67.5h3" stroke="#00ff00"/><rect x="76.5" y="61.5" width="2" height="3" fill="#000" stroke="#00ff00"/><rect x="80.5" y="64.5" width="2" height="3" fill="#fff" stroke="#00ff00"/><path d="M85.5 70V78" stroke="#00ff00"/><path d="M84 70.5h3" stroke="#00ff00"/><path d="M89.5 67V74" stroke="#00ff00"/><path d="M88 67.5h3" stroke="#00ff00"/><path d="M93.5 64V68" stroke="#00ff00"/><path d="M92 64.5h3" stroke="#00ff00"/><path d="M97.5 61V72" stroke="#00ff00"/><path d="M96 67.5h3" stroke="#00ff00"/><path d="M101.5 61V64" stroke="#00ff00"/><rect x="100.5" y="64.5" width="2" height="3" fill="#fff" stroke="#00ff00"/><path d="M105.5 67V74" stroke="#00ff00"/><path d="M104 70.5h3" stroke="#00ff00"/><path d="M109.5 70V74" stroke="#00ff00"/><path d="M108 73.5h3" stroke="#00ff00"/><path d="M113.5 73V84" stroke="#00ff00"/><path d="M112 77.5h3" stroke="#00ff00"/><path d="M117.5 67V73" stroke="#00ff00"/><rect x="116.5" y="73.5" width="2" height="7" fill="#000" stroke="#00ff00"/><path d="M121.5 73V82" stroke="#00ff00"/><path d="M120 77.5h3" stroke="#00ff00"/><rect x="124.5" y="73.5" width="2" height="4" fill="#fff" stroke="#00ff00"/><rect x="128.5" y="73.5" width="2" height="17" fill="#fff" stroke="#00ff00"/><path d="M133.5 90V95" stroke="#00ff00"/><rect x="132.5" y="87.5" width="2" height="3" fill="#fff" stroke="#00ff00"/><path d="M137.5 90V94" stroke="#00ff00"/><path d="M136 93.5h3" stroke="#00ff00"/><path d="M141.5 90V95" stroke="#00ff00"/><rect x="140.5" y="87.5" width="2" height="3" fill="#000" stroke="#00ff00"/><path d="M145.5 90V95" stroke="#00ff00"/><path d="M144 90.5h3" stroke="#00ff00"/><rect x="148.5" y="87.5" width="2" height="7" fill="#fff" stroke="#00ff00"/><path d="M153.5 91V98" stroke="#00ff00"/><rect x="152.5" y="87.5" width="2" height="4" fill="#000" stroke="#00ff00"/><rect x="156.5" y="83.5" width="2" height="8" fill="#fff" stroke="#00ff00"/><rect x="160.5" y="87.5" width="2" height="7" fill="#000" stroke="#00ff00"/><path d="M165.5 87V91" stroke="#00ff00"/><path d="M164 90.5h3" stroke="#00ff00"/><path d="M169.5 91V95" stroke="#00ff00"/><rect x="168.5" y="87.5" width="2" height="4" fill="#fff" stroke="#00ff00"/><path d="M172 87.5h3" stroke="#00ff00"/><path d="M177.5 91V95" stroke="#00ff00"/><rect x="176.5" y="83.5" width="2" height="8" fill="#fff" stroke="#00ff00"/><path d="M181.5 91V95" stroke="#00ff00"/><path d="M180 94.5h3" stroke="#00ff00"/><rect x="184.5" y="97.5" width="2" height="2" fill="#fff" stroke="#00ff00"/><rect x="188.5" y="99.5" width="2" height="4" fill="#000" stroke="#00ff00"/><rect x="192.5" y="97.5" width="2" height="2" fill="#fff" stroke="#00ff00"/><path d="M197.5 97V100" stroke="#00ff00"/><rect x="196.5" y="94.5" width="2" height="3" fill="#000" stroke="#00ff00"/><rect x="200.5" y="94.5" width="2" height="3" fill="#000" stroke="#00ff00"/><rect x="204.5" y="94.5" width="2" height="3" fill="#000" stroke="#00ff00"/><rect x="208.5" y="91.5" width="2" height="6" fill="#000" stroke="#00ff00"/><rect x="212.5" y="94.5" width="2" height="5" fill="#fff" stroke="#00ff00"/><rect x="216.5" y="97.5" width="2" height="2" fill="#fff" stroke="#00ff00"/><path d="M221.5 97V100" stroke="#00ff00"/><rect x="220.5" y="94.5" width="2" height="3" fill="#000" stroke="#00ff00"/><path d="M225.5 91V94" stroke="#00ff00"/><rect x="224.5" y="94.5" width="2" height="3" fill="#000" stroke="#00ff00"/><rect x="228.5" y="91.5" width="2" height="3" fill="#fff" stroke="#00ff00"/><path d="M233.5 91V95" stroke="#00ff00"/><path d="M232 91.5h3" stroke="#00ff00"/><path d="M237.5 87V92" stroke="#00ff00"/><path d="M236 87.5h3" stroke="#00ff00"/><path d="M241.5 87V92" stroke="#00ff00"/><path d="M240 89.5h3" stroke="#00ff00"/><rect x="244.5" y="87.5" width="2" height="4" fill="#fff" stroke="#00ff00"/><rect x="248.5" y="87.5" width="2" height="7" fill="#fff" stroke="#00ff00"/><path d="M253.5 87V91" stroke="#00ff00"/><path d="M253.5 94V98" stroke="#00ff00"/><rect x="252.5" y="91.5" width="2" height="3" fill="#fff" stroke="#00ff00"/><path d="M257.5 94V98" stroke="#00ff00"/><path d="M256 97.5h3" stroke="#00ff00"/><rect x="260.5" y="91.5" width="2" height="3" fill="#000" stroke="#00ff00"/><rect x="264.5" y="87.5" width="2" height="4" fill="#fff" stroke="#00ff00"/><path d="M269.5 91V98" stroke="#00ff00"/><path d="M268 94.5h3" stroke="#00ff00"/><path d="M273.5 94V98" stroke="#00ff00"/><rect x="272.5" y="91.5" width="2" height="3" fill="#fff" stroke="#00ff00"/><path d="M277.5 91V94" stroke="#00ff00"/><rect x="276.5" y="94.5" width="2" height="3" fill="#000" stroke="#00ff00"/><path d="M281.5 94V98" stroke="#00ff00"/><path d="M280 97.5h3" stroke="#00ff00"/><rect x="284.5" y="94.5" width="2" height="3" fill="#fff" stroke="#00ff00"/><path d="M289.5 97V99" stroke="#00ff00"/><path d="M289.5 113V121" stroke="#00ff00"/><rect x="288.5" y="99.5" width="2" height="14" fill="#fff" stroke="#00ff00"/><rect x="292.5" y="100.5" width="2" height="10" fill="#000" stroke="#00ff00"/><path d="M297.5 96V100" stroke="#00ff00"/><rect x="296.5" y="100.5" width="2" height="3" fill="#000" stroke="#00ff00"/><path d="M301.5 93V101" stroke="#00ff00"/><path d="M300 96.5h3" stroke="#00ff00"/><rect x="304.5" y="96.5" width="2" height="4" fill="#000" stroke="#00ff00"/><path d="M309.5 83V87" stroke="#00ff00"/><path d="M309.5 93V98" stroke="#00ff00"/><rect x="308.5" y="87.5" width="2" height="6" fill="#000" stroke="#00ff00"/><rect x="312.5" y="87.5" width="2" height="4" fill="#000" stroke="#00ff00"/><path d="M317.5 87V92" stroke="#00ff00"/><path d="M316 91.5h3" stroke="#00ff00"/><rect x="320.5" y="87.5" width="2" height="4" fill="#fff" stroke="#00ff00"/><path d="M325.5 91V94" stroke="#00ff00"/><path d="M324 93.5h3" stroke="#00ff00"/><path d="M329.5 87V91" stroke="#00ff00"/><rect x="328.5" y="91.5" width="2" height="2" fill="#fff" stroke="#00ff00"/><path d="M333.5 87V93" stroke="#00ff00"/><rect x="332.5" y="93.5" width="2" height="7" fill="#000" stroke="#00ff00"/><path d="M337.5 93V97" stroke="#00ff00"/><path d="M336 96.5h3" stroke="#00ff00"/><path d="M341.5 93V96" stroke="#00ff00"/><rect x="340.5" y="96.5" width="2" height="4" fill="#000" stroke="#00ff00"/><rect x="344.5" y="96.5" width="2" height="4" fill="#000" stroke="#00ff00"/><rect x="348.5" y="96.5" width="2" height="4" fill="#000" stroke="#00ff00"/><path d="M352 93.5h3" stroke="#00ff00"/><path d="M356 96.5h3" stroke="#00ff00"/><rect x="360.5" y="93.5" width="2" height="3" fill="#fff" stroke="#00ff00"/><path d="M365.5 96V101" stroke="#00ff00"/><path d="M364 100.5h3" stroke="#00ff00"/><path d="M369.5 100V108" stroke="#00ff00"/><path d="M368 103.5h3" stroke="#00ff00"/><rect x="372.5" y="103.5" width="2" height="4" fill="#fff" stroke="#00ff00"/><path d="M376 103.5h3" stroke="#00ff00"/><rect x="380.5" y="103.5" width="2" height="4" fill="#fff" stroke="#00ff00"/><path d="M385.5 93V100" stroke="#00ff00"/><rect x="384.5" y="100.5" width="2" height="3" fill="#000" stroke="#00ff00"/><path d="M388 96.5h3" stroke="#00ff00"/><path d="M393.5 91V93" stroke="#00ff00"/><rect x="392.5" y="93.5" width="2" height="3" fill="#fff" stroke="#00ff00"/><path d="M397.5 87V91" stroke="#00ff00"/><path d="M397.5 93V98" stroke="#00ff00"/><rect x="396.5" y="91.5" width="2" height="2" fill="#000" stroke="#00ff00"/><path d="M401.5 93V98" stroke="#00ff00"/><path d="M400 93.5h3" stroke="#00ff00"/><path d="M405.5 93V97" stroke="#00ff00"/><path d="M404 96.5h3" stroke="#00ff00"/><rect x="408.5" y="93.5" width="2" height="3" fill="#fff" stroke="#00ff00"/><rect x="412.5" y="93.5" width="2" height="3" fill="#fff" stroke="#00ff00"/><path d="M417.5 96V101" stroke="#00ff00"/><path d="M416 96.5h3" stroke="#00ff00"/><path d="M421.5 96V101" stroke="#00ff00"/><path d="M420 96.5h3" stroke="#00ff00"/><path d="M425.5 96V100" stroke="#00ff00"/><rect x="424.5" y="100.5" width="2" height="7" fill="#fff" stroke="#00ff00"/><path d="M429.5 64V73" stroke="#00ff00"/><path d="M429.5 103V108" stroke="#00ff00"/><rect x="428.5" y="73.5" width="2" height="30" fill="#000" stroke="#00ff00"/><path d="M433.5 73V77" stroke="#00ff00"/><path d="M433.5 116V127" stroke="#00ff00"/><rect x="432.5" y="77.5" width="2" height="39" fill="#fff" stroke="#00ff00"/><path d="M437.5 110V113" stroke="#00ff00"/><rect x="436.5" y="113.5" width="2" height="25" fill="#fff" stroke="#00ff00"/><path d="M441.5 132V136" stroke="#00ff00"/><path d="M441.5 158V182" stroke="#00ff00"/><rect x="440.5" y="136.5" width="2" height="22" fill="#fff" stroke="#00ff00"/><path d="M445.5 136V145" stroke="#00ff00"/><rect x="444.5" y="145.5" width="2" height="17" fill="#000" stroke="#00ff00"/><path d="M449.5 162V166" stroke="#00ff00"/><rect x="448.5" y="145.5" width="2" height="17" fill="#fff" stroke="#00ff00"/><rect x="452.5" y="151.5" width="2" height="14" fill="#000" stroke="#00ff00"/><rect x="456.5" y="141.5" width="2" height="7" fill="#000" stroke="#00ff00"/><rect x="460.5" y="136.5" width="2" height="10" fill="#000" stroke="#00ff00"/><path d="M465.5 122V128" stroke="#00ff00"/><rect x="464.5" y="128.5" width="2" height="10" fill="#000" stroke="#00ff00"/><path d="M469.5 119V122" stroke="#00ff00"/><path d="M469.5 126V130" stroke="#00ff00"/><rect x="468.5" y="122.5" width="2" height="4" fill="#000" stroke="#00ff00"/><rect x="472.5" y="119.5" width="2" height="7" fill="#fff" stroke="#00ff00"/><rect x="476.5" y="122.5" width="2" height="11" fill="#fff" stroke="#00ff00"/><path d="M481.5 132V139" stroke="#00ff00"/><path d="M480 136.5h3" stroke="#00ff00"/><path d="M485.5 136V143" stroke="#00ff00"/><path d="M484 138.5h3" stroke="#00ff00"/><rect x="488.5" y="128.5" width="2" height="14" fill="#000" stroke="#00ff00"/><path d="M493.5 128V137" stroke="#00ff00"/><path d="M492 132.5h3" stroke="#00ff00"/><rect x="496.5" y="128.5" width="2" height="8" fill="#fff" stroke="#00ff00"/><rect x="500.5" y="136.5" width="2" height="2" fill="#000" stroke="#00ff00"/><path d="M505.5 128V132" stroke="#00ff00"/><path d="M505.5 136V139" stroke="#00ff00"/><rect x="504.5" y="132.5" width="2" height="4" fill="#000" stroke="#00ff00"/><path d="M508 128.5h3" stroke="#00ff00"/><path d="M512 132.5h3" stroke="#00ff00"/><path d="M517.5 136V143" stroke="#00ff00"/><path d="M516 136.5h3" stroke="#00ff00"/><rect x="520.5" y="126.5" width="2" height="7" fill="#000" stroke="#00ff00"/><path d="M525.5 112V124" stroke="#00ff00"/><path d="M524 123.5h3" stroke="#00ff00"/><path d="M529.5 120V123" stroke="#00ff00"/><path d="M528 120.5h3" stroke="#00ff00"/><path d="M532 123.5h3" stroke="#00ff00"/><rect x="536.5" y="119.5" width="2" height="4" fill="#fff" stroke="#00ff00"/><path d="M4.5 4.5H546.5V200.5H4.5Z" stroke="#fff" fill="none"/><path d="M546 38.5h3" stroke="#fff"/><path d="M546 86.5h3" stroke="#fff"/><path d="M546 135.5h3" stroke="#fff"/><path d="M546 183.5h3" stroke="#fff"/><path d="M69.5 197V200" stroke="#fff"/><path d="M133.5 197V200" stroke="#fff"/><path d="M197.5 197V200" stroke="#fff"/><path d="M261.5 197V200" stroke="#fff"/><path d="M325.5 197V200" stroke="#fff"/><path d="M389.5 197V200" stroke="#fff"/><path d="M453.5 197V200" stroke="#fff"/><path d="M517.5 197V200" stroke="#fff"/><path d="M5.5 197V200" stroke="#fff"/><path d="M8 11h7l-3.5 4z" fill="#fff"/></svg>
<div class="ct" style="left:352px;top:135.27755px;font-size:9.3px">XTIUSD,M1&nbsp; 62.85 62.85 62.84 62.84</div>
<div class="ct" style="left:885px;top:161.27755px;font-size:9.3px">63.10</div>
<div class="ct" style="left:885px;top:209.27755px;font-size:9.3px">62.95</div>
<div class="ct" style="left:885px;top:258.27755px;font-size:9.3px">62.80</div>
<div class="ct" style="left:885px;top:306.27755px;font-size:9.3px">62.65</div>
<div style="position:absolute;left:881px;top:245px;width:29px;height:10px;background:#fff"></div>
<div class="ct" style="left:883px;top:245.27755px;font-size:9.3px;color:#000">62.84</div>
<div class="ct" style="left:337px;top:329.27755px;font-size:9.3px">27 Feb 2018</div>
<div class="ct" style="left:401px;top:329.27755px;font-size:9.3px">27 Feb 21:49</div>
<div class="ct" style="left:465px;top:329.27755px;font-size:9.3px">27 Feb 22:05</div>
<div class="ct" style="left:529px;top:329.27755px;font-size:9.3px">27 Feb 22:21</div>
<div class="ct" style="left:593px;top:329.27755px;font-size:9.3px">27 Feb 22:38</div>
<div class="ct" style="left:657px;top:329.27755px;font-size:9.3px">27 Feb 22:58</div>
<div class="ct" style="left:721px;top:329.27755px;font-size:9.3px">27 Feb 23:18</div>
<div class="ct" style="left:785px;top:329.27755px;font-size:9.3px">27 Feb 23:35</div>
<div class="ct" style="left:849px;top:329.27755px;font-size:9.3px">27 Feb 23:52</div>
<div style="position:absolute;left:925px;top:105px;width:595px;height:247px;background:#d4d4d4;border-top:1px solid #d4d4d4;border-left:1px solid #d4d4d4;border-right:1px solid #404040;border-bottom:1px solid #404040;box-shadow:inset 1px 1px 0 #fff,inset -1px -1px 0 #808080"></div>
<div style="position:absolute;left:928px;top:109px;width:588px;height:18px;background:linear-gradient(90deg,#808080,#c0c0c0)"></div>
<svg style="left:931px;top:110px" width="15" height="15"><rect x="0.5" y="0.5" width="9" height="7" fill="#fff" stroke="#3a7af0" stroke-dasharray="1 1"/><rect x="4.5" y="5.5" width="9" height="8" fill="#fff" stroke="#3a7af0" stroke-dasharray="1 1"/><path d="M6 9.5l1.5 2 1.5-3 1.5 3 1.5-2" stroke="#3a7af0" fill="none" stroke-width="0.9"/><path d="M2 3.5h2l1-1.5" stroke="#3a7af0" fill="none" stroke-width="0.9"/></svg>
<div class="t" style="left:947px;top:111px;font-weight:bold;font-size:11px;letter-spacing:0.25px;line-height:16px;color:#d4d0c8">AUDUSD,M1</div>
<div style="position:absolute;left:1464px;top:111px;width:16px;height:14px;background:#d4d4d4;border-top:1px solid #fff;border-left:1px solid #fff;border-right:1px solid #404040;border-bottom:1px solid #404040;box-shadow:inset -1px -1px 0 #808080"><div style="position:absolute;left:4px;top:8px;width:6px;height:2px;background:#000"></div></div>
<div style="position:absolute;left:1480px;top:111px;width:16px;height:14px;background:#d4d4d4;border-top:1px solid #fff;border-left:1px solid #fff;border-right:1px solid #404040;border-bottom:1px solid #404040;box-shadow:inset -1px -1px 0 #808080"><div style="position:absolute;left:3px;top:2px;width:9px;height:8px;border:1px solid #808080;border-top-width:2px"></div></div>
<div style="position:absolute;left:1498px;top:111px;width:16px;height:14px;background:#d4d4d4;border-top:1px solid #fff;border-left:1px solid #fff;border-right:1px solid #404040;border-bottom:1px solid #404040;box-shadow:inset -1px -1px 0 #808080"><svg style="left:3px;top:2px" width="9" height="8"><path d="M1 0.5L8 7.5M8 0.5L1 7.5" stroke="#000" stroke-width="1.4"/></svg></div>
<div style="position:absolute;left:928px;top:128px;width:588px;height:220px;background:#000;border-top:2px solid #404040;border-left:2px solid #404040;border-right:2px solid #fff;border-bottom:2px solid #fff"></div>
<div style="position:absolute;left:928px;top:128px;width:588px;height:1px;background:#808080"></div>
<div style="position:absolute;left:928px;top:128px;width:1px;height:220px;background:#808080"></div>
<svg style="left:928px;top:128px" width="588" height="220" viewBox="0 0 588 220" shape-rendering="crispEdges"><path d="M7 24.5H547" stroke="#8192a4" stroke-dasharray="3 3"/><path d="M7 59.5H547" stroke="#8192a4" stroke-dasharray="3 3"/><path d="M7 94.5H547" stroke="#8192a4" stroke-dasharray="3 3"/><path d="M7 128.5H547" stroke="#8192a4" stroke-dasharray="3 3"/><path d="M7 163.5H547" stroke="#8192a4" stroke-dasharray="3 3"/><path d="M7 197.5H547" stroke="#8192a4" stroke-dasharray="3 3"/><path d="M38.5 4V200" stroke="#8192a4" stroke-dasharray="3 3"/><path d="M70.5 4V200" stroke="#8192a4" stroke-dasharray="3 3"/><path d="M102.5 4V200" stroke="#8192a4" stroke-dasharray="3 3"/><path d="M134.5 4V200" stroke="#8192a4" stroke-dasharray="3 3"/><path d="M166.5 4V200" stroke="#8192a4" stroke-dasharray="3 3"/><path d="M198.5 4V200" stroke="#8192a4" stroke-dasharray="3 3"/><path d="M230.5 4V200" stroke="#8192a4" stroke-dasharray="3 3"/><path d="M262.5 4V200" stroke="#8192a4" stroke-dasharray="3 3"/><path d="M294.5 4V200" stroke="#8192a4" stroke-dasharray="3 3"/><path d="M326.5 4V200" stroke="#8192a4" stroke-dasharray="3 3"/><path d="M358.5 4V200" stroke="#8192a4" stroke-dasharray="3 3"/><path d="M390.5 4V200" stroke="#8192a4" stroke-dasharray="3 3"/><path d="M422.5 4V200" stroke="#8192a4" stroke-dasharray="3 3"/><path d="M454.5 4V200" stroke="#8192a4" stroke-dasharray="3 3"/><path d="M486.5 4V200" stroke="#8192a4" stroke-dasharray="3 3"/><path d="M518.5 4V200" stroke="#8192a4" stroke-dasharray="3 3"/><path d="M6 154.5H547" stroke="#8a9aab"/><path d="M6.5 56V68M8.5 46V59M10.5 39V53M12.5 33V45M14.5 36V47M16.5 37V46M18.5 36V42M20.5 35V42M22.5 33V40M24.5 28V41M26.5 25V42M28.5 34V48M30.5 37V51M32.5 38V48M34.5 38V44M36.5 37V43M38.5 35V46M40.5 35V44M42.5 37V46M44.5 38V47M46.5 38V47M48.5 35V46M50.5 39V47M52.5 44V53M54.5 47V53M56.5 46V54M58.5 45V53M60.5 41V51M62.5 40V48M64.5 38V46M66.5 33V42M68.5 28V40M70.5 27V39M72.5 24V31M74.5 22V30M76.5 21V29M78.5 22V30M80.5 25V33M82.5 25V33M84.5 27V37M86.5 28V36M88.5 28V40M90.5 34V39M92.5 34V39M94.5 33V39M96.5 33V42M98.5 33V41M100.5 35V53M102.5 48V63M104.5 53V64M106.5 53V63M108.5 54V65M110.5 55V66M112.5 53V63M114.5 48V58M116.5 45V55M118.5 39V53M120.5 42V50M122.5 48V52M124.5 49V60M126.5 54V65M128.5 57V67M130.5 62V71M132.5 66V73M134.5 65V73M136.5 66V76M138.5 70V80M140.5 73V83M142.5 71V83M144.5 73V80M146.5 72V80M148.5 67V77M150.5 75V82M152.5 84V92M154.5 87V100M156.5 93V103M158.5 97V105M160.5 93V107M162.5 88V100M164.5 83V94M166.5 77V90M168.5 76V89M170.5 77V89M172.5 78V88M174.5 82V89M176.5 82V93M178.5 90V98M180.5 94V100M182.5 87V100M184.5 85V95M186.5 86V93M188.5 84V94M190.5 83V94M192.5 85V92M194.5 87V98M196.5 95V103M198.5 98V106M200.5 95V101M202.5 92V97M204.5 89V96M206.5 85V94M208.5 90V98M210.5 95V108M212.5 99V113M214.5 100V109M216.5 95V105M218.5 94V102M220.5 90V98M222.5 85V96M224.5 89V100M226.5 92V101M228.5 95V103M230.5 97V105M232.5 97V105M234.5 88V99M236.5 90V100M238.5 92V109M240.5 102V114M242.5 111V123M244.5 116V127M246.5 115V127M248.5 117V126M250.5 116V126M252.5 121V130M254.5 125V133M256.5 125V131M258.5 124V128M260.5 120V127M262.5 120V127M264.5 118V126M266.5 116V129M268.5 118V129M270.5 119V128M272.5 119V126M274.5 115V121M276.5 113V121M278.5 119V126M280.5 120V128M282.5 120V128M284.5 123V128M286.5 122V130M288.5 122V133M290.5 122V134M292.5 126V134M294.5 131V137M296.5 131V136M298.5 131V136M300.5 124V134M302.5 127V135M304.5 127V134M306.5 130V138M308.5 132V139M310.5 131V137M312.5 133V141M314.5 132V141M316.5 126V135M318.5 126V137M320.5 132V142M322.5 133V143M324.5 133V143M326.5 129V140M328.5 129V142M330.5 136V146M332.5 139V145M334.5 137V146M336.5 137V141M338.5 137V143M340.5 139V149M342.5 142V153M344.5 146V154M346.5 140V150M348.5 140V150M350.5 141V148M352.5 144V151M354.5 146V151M356.5 145V152M358.5 144V150M360.5 145V149M362.5 142V149M364.5 144V148M366.5 143V147M368.5 142V147M370.5 145V148M372.5 147V153M374.5 151V156M376.5 149V157M378.5 152V155M380.5 150V165M382.5 158V170M384.5 162V173M386.5 168V177M388.5 172V176M390.5 174V177M392.5 165V179M394.5 161V167M396.5 161V164M398.5 159V162M400.5 160V165M402.5 163V166M404.5 164V167M406.5 166V172M408.5 170V177M410.5 171V176M412.5 172V176M414.5 170V175M416.5 170V174M418.5 172V183M420.5 178V188M422.5 182V186M424.5 184V187M426.5 180V183M428.5 181V186M430.5 185V190M432.5 190V193M434.5 190V193M436.5 188V192M438.5 187V192M440.5 190V193M442.5 192V195M444.5 191V194M446.5 190V193M448.5 186V192M450.5 183V187M452.5 185V188M454.5 184V187M456.5 185V188M458.5 184V187M460.5 182V187M462.5 181V184M464.5 181V185M466.5 179V186M468.5 173V180M470.5 173V176M472.5 172V175M474.5 169V173M476.5 167V172M478.5 169V173M480.5 168V178M482.5 168V176M484.5 168V175M486.5 168V174M488.5 171V175M490.5 172V176M492.5 168V174M494.5 170V173M496.5 170V173M498.5 169V172M500.5 165V171M502.5 157V167M504.5 157V165M506.5 162V167M508.5 167V170M510.5 169V172M512.5 168V173M514.5 167V170M516.5 164V167M518.5 160V163M520.5 162V166M522.5 160V164M524.5 160V165M526.5 158V161M528.5 158V161M530.5 154V161M532.5 157V160M534.5 159V162M536.5 160V164M538.5 155V162M540.5 152V157M542.5 148V154" stroke="#00ff00"/><path d="M5.5 4.5H547.5V200.5H5.5Z" stroke="#fff" fill="none"/><path d="M547 24.5h3" stroke="#fff"/><path d="M547 59.5h3" stroke="#fff"/><path d="M547 94.5h3" stroke="#fff"/><path d="M547 128.5h3" stroke="#fff"/><path d="M547 163.5h3" stroke="#fff"/><path d="M547 197.5h3" stroke="#fff"/><path d="M70.5 197V200" stroke="#fff"/><path d="M134.5 197V200" stroke="#fff"/><path d="M198.5 197V200" stroke="#fff"/><path d="M262.5 197V200" stroke="#fff"/><path d="M326.5 197V200" stroke="#fff"/><path d="M390.5 197V200" stroke="#fff"/><path d="M454.5 197V200" stroke="#fff"/><path d="M518.5 197V200" stroke="#fff"/><path d="M6.5 197V200" stroke="#fff"/><path d="M9 11h7l-3.5 4z" fill="#fff"/></svg>
<div class="ct" style="left:948px;top:135.27755px;font-size:9.3px">AUDUSD,M1&nbsp; 0.77908 0.77919 0.77904 0.77904</div>
<div class="ct" style="left:1481px;top:147.27755px;font-size:9.3px">0.78145</div>
<div class="ct" style="left:1481px;top:182.27755px;font-size:9.3px">0.78080</div>
<div class="ct" style="left:1481px;top:217.27755px;font-size:9.3px">0.78015</div>
<div class="ct" style="left:1481px;top:251.27755px;font-size:9.3px">0.77950</div>
<div class="ct" style="left:1481px;top:286.27755px;font-size:9.3px">0.77885</div>
<div class="ct" style="left:1481px;top:320.27755px;font-size:9.3px">0.77825</div>
<div style="position:absolute;left:1477px;top:277px;width:38px;height:10px;background:#fff"></div>
<div class="ct" style="left:1479px;top:277.27755px;font-size:9.3px;color:#000">0.77904</div>
<div class="ct" style="left:933px;top:329.27755px;font-size:9.3px">27 Feb 2018</div>
<div class="ct" style="left:997px;top:329.27755px;font-size:9.3px">27 Feb 20:21</div>
<div class="ct" style="left:1061px;top:329.27755px;font-size:9.3px">27 Feb 20:53</div>
<div class="ct" style="left:1125px;top:329.27755px;font-size:9.3px">27 Feb 21:25</div>
<div class="ct" style="left:1189px;top:329.27755px;font-size:9.3px">27 Feb 21:57</div>
<div class="ct" style="left:1253px;top:329.27755px;font-size:9.3px">27 Feb 22:29</div>
<div class="ct" style="left:1317px;top:329.27755px;font-size:9.3px">27 Feb 23:01</div>
<div class="ct" style="left:1381px;top:329.27755px;font-size:9.3px">27 Feb 23:33</div>
<div class="ct" style="left:1445px;top:329.27755px;font-size:9.3px">28 Feb 00:07</div>
<div style="position:absolute;left:330px;top:352px;width:595px;height:247px;background:#d4d4d4;border-top:1px solid #d4d4d4;border-left:1px solid #d4d4d4;border-right:1px solid #404040;border-bottom:1px solid #404040;box-shadow:inset 1px 1px 0 #fff,inset -1px -1px 0 #808080"></div>
<div style="position:absolute;left:333px;top:356px;width:588px;height:18px;background:linear-gradient(90deg,#808080,#c0c0c0)"></div>
<svg style="left:336px;top:357px" width="15" height="15"><rect x="0.5" y="0.5" width="9" height="7" fill="#fff" stroke="#3a7af0" stroke-dasharray="1 1"/><rect x="4.5" y="5.5" width="9" height="8" fill="#fff" stroke="#3a7af0" stroke-dasharray="1 1"/><path d="M6 9.5l1.5 2 1.5-3 1.5 3 1.5-2" stroke="#3a7af0" fill="none" stroke-width="0.9"/><path d="M2 3.5h2l1-1.5" stroke="#3a7af0" fill="none" stroke-width="0.9"/></svg>
<div class="t" style="left:352px;top:358px;font-weight:bold;font-size:11px;letter-spacing:0.25px;line-height:16px;color:#d4d0c8">GBPUSD,M1</div>
<div style="position:absolute;left:869px;top:358px;width:16px;height:14px;background:#d4d4d4;border-top:1px solid #fff;border-left:1px solid #fff;border-right:1px solid #404040;border-bottom:1px solid #404040;box-shadow:inset -1px -1px 0 #808080"><div style="position:absolute;left:4px;top:8px;width:6px;height:2px;background:#000"></div></div>
<div style="position:absolute;left:885px;top:358px;width:16px;height:14px;background:#d4d4d4;border-top:1px solid #fff;border-left:1px solid #fff;border-right:1px solid #404040;border-bottom:1px solid #404040;box-shadow:inset -1px -1px 0 #808080"><div style="position:absolute;left:3px;top:2px;width:9px;height:8px;border:1px solid #808080;border-top-width:2px"></div></div>
<div style="position:absolute;left:903px;top:358px;width:16px;height:14px;background:#d4d4d4;border-top:1px solid #fff;border-left:1px solid #fff;border-right:1px solid #404040;border-bottom:1px solid #404040;box-shadow:inset -1px -1px 0 #808080"><svg style="left:3px;top:2px" width="9" height="8"><path d="M1 0.5L8 7.5M8 0.5L1 7.5" stroke="#000" stroke-width="1.4"/></svg></div>
<div style="position:absolute;left:333px;top:375px;width:588px;height:220px;background:#000;border-top:2px solid #404040;border-left:2px solid #404040;border-right:2px solid #fff;border-bottom:2px solid #fff"></div>
<div style="position:absolute;left:333px;top:375px;width:588px;height:1px;background:#808080"></div>
<div style="position:absolute;left:333px;top:375px;width:1px;height:220px;background:#808080"></div>
<svg style="left:333px;top:375px" width="588" height="220" viewBox="0 0 588 220" shape-rendering="crispEdges"><path d="M6 28.5H546" stroke="#8192a4" stroke-dasharray="3 3"/><path d="M6 62.5H546" stroke="#8192a4" stroke-dasharray="3 3"/><path d="M6 96.5H546" stroke="#8192a4" stroke-dasharray="3 3"/><path d="M6 130.5H546" stroke="#8192a4" stroke-dasharray="3 3"/><path d="M6 197.5H546" stroke="#8192a4" stroke-dasharray="3 3"/><path d="M37.5 4V200" stroke="#8192a4" stroke-dasharray="3 3"/><path d="M69.5 4V200" stroke="#8192a4" stroke-dasharray="3 3"/><path d="M101.5 4V200" stroke="#8192a4" stroke-dasharray="3 3"/><path d="M133.5 4V200" stroke="#8192a4" stroke-dasharray="3 3"/><path d="M165.5 4V200" stroke="#8192a4" stroke-dasharray="3 3"/><path d="M197.5 4V200" stroke="#8192a4" stroke-dasharray="3 3"/><path d="M229.5 4V200" stroke="#8192a4" stroke-dasharray="3 3"/><path d="M261.5 4V200" stroke="#8192a4" stroke-dasharray="3 3"/><path d="M293.5 4V200" stroke="#8192a4" stroke-dasharray="3 3"/><path d="M325.5 4V200" stroke="#8192a4" stroke-dasharray="3 3"/><path d="M357.5 4V200" stroke="#8192a4" stroke-dasharray="3 3"/><path d="M389.5 4V200" stroke="#8192a4" stroke-dasharray="3 3"/><path d="M421.5 4V200" stroke="#8192a4" stroke-dasharray="3 3"/><path d="M453.5 4V200" stroke="#8192a4" stroke-dasharray="3 3"/><path d="M485.5 4V200" stroke="#8192a4" stroke-dasharray="3 3"/><path d="M517.5 4V200" stroke="#8192a4" stroke-dasharray="3 3"/><path d="M5 163.5H546" stroke="#8a9aab"/><path d="M5.5 80V102M7.5 58V94M9.5 59V80M11.5 67V87M13.5 70V89M15.5 75V86M17.5 77V84M19.5 70V82M21.5 61V75M23.5 59V94M25.5 78V100M27.5 81V93M29.5 74V87M31.5 80V88M33.5 80V88M35.5 77V89M37.5 77V91M39.5 67V89M41.5 73V86M43.5 74V87M45.5 79V85M47.5 80V96M49.5 85V100M51.5 77V92M53.5 79V90M55.5 82V90M57.5 77V88M59.5 74V82M61.5 71V81M63.5 70V78M65.5 70V77M67.5 67V78M69.5 38V67M71.5 34V58M73.5 20V44M75.5 27V38M77.5 28V40M79.5 29V37M81.5 26V40M83.5 28V40M85.5 29V50M87.5 36V52M89.5 35V46M91.5 36V46M93.5 35V47M95.5 40V46M97.5 36V65M99.5 54V75M101.5 63V72M103.5 53V65M105.5 52V60M107.5 50V58M109.5 42V56M111.5 42V58M113.5 45V58M115.5 49V59M117.5 50V57M119.5 51V59M121.5 54V68M123.5 62V68M125.5 64V74M127.5 66V76M129.5 65V75M131.5 62V68M133.5 61V69M135.5 60V70M137.5 63V73M139.5 60V70M141.5 60V71M143.5 56V66M145.5 48V61M147.5 52V63M149.5 61V82M151.5 81V93M153.5 89V97M155.5 95V98M157.5 86V99M159.5 81V95M161.5 87V93M163.5 88V98M165.5 86V95M167.5 82V92M169.5 85V91M171.5 86V94M173.5 85V99M175.5 89V100M177.5 92V103M179.5 78V106M181.5 77V96M183.5 78V90M185.5 76V87M187.5 75V82M189.5 70V81M191.5 77V88M193.5 82V94M195.5 85V93M197.5 83V95M199.5 79V90M201.5 78V83M203.5 69V80M205.5 73V84M207.5 77V87M209.5 83V93M211.5 84V92M213.5 79V86M215.5 72V86M217.5 70V80M219.5 71V80M221.5 76V84M223.5 79V84M225.5 82V89M227.5 86V94M229.5 84V91M231.5 85V91M233.5 87V94M235.5 92V105M237.5 101V114M239.5 110V123M241.5 111V122M243.5 115V125M245.5 113V125M247.5 111V125M249.5 116V129M251.5 115V125M253.5 114V125M255.5 115V131M257.5 118V130M259.5 118V133M261.5 123V133M263.5 117V134M265.5 114V136M267.5 113V124M269.5 106V116M271.5 97V110M273.5 96V102M275.5 102V110M277.5 104V113M279.5 105V112M281.5 106V118M283.5 115V121M285.5 110V123M287.5 107V127M289.5 118V128M291.5 126V133M293.5 129V138M295.5 121V136M297.5 112V132M299.5 121V131M301.5 121V130M303.5 125V134M305.5 128V138M307.5 124V134M309.5 125V136M311.5 122V132M313.5 123V129M315.5 124V136M317.5 129V145M319.5 138V148M321.5 135V144M323.5 137V141M325.5 133V143M327.5 135V148M329.5 133V142M331.5 131V138M333.5 133V140M335.5 130V136M337.5 130V143M339.5 139V152M341.5 141V155M343.5 135V148M345.5 131V146M347.5 140V145M349.5 142V148M351.5 145V154M353.5 152V161M355.5 149V163M357.5 154V161M359.5 157V166M361.5 160V168M363.5 157V165M365.5 158V166M367.5 159V171M369.5 166V174M371.5 169V180M373.5 171V183M375.5 173V187M377.5 173V183M379.5 177V183M381.5 178V184M383.5 177V184M385.5 178V185M387.5 177V185M389.5 172V183M391.5 162V176M393.5 155V167M395.5 155V168M397.5 166V172M399.5 170V173M401.5 170V173M403.5 169V179M405.5 177V185M407.5 179V182M409.5 178V181M411.5 174V184M413.5 176V180M415.5 175V187M417.5 183V190M419.5 189V192M421.5 189V193M423.5 189V192M425.5 190V193M427.5 189V193M429.5 191V194M431.5 187V195M433.5 188V191M435.5 187V190M437.5 184V188M439.5 182V188M441.5 183V186M443.5 183V186M445.5 175V183M447.5 172V175M449.5 173V177M451.5 172V176M453.5 174V177M455.5 173V176M457.5 172V175M459.5 173V176M461.5 171V174M463.5 168V173M465.5 164V172M467.5 159V166M469.5 158V163M471.5 157V162M473.5 157V161M475.5 153V161M477.5 147V158M479.5 145V153M481.5 149V152M483.5 150V155M485.5 148V156M487.5 151V154M489.5 151V154M491.5 152V155M493.5 148V154M495.5 149V156M497.5 149V154M499.5 147V153M501.5 148V160M503.5 159V162M505.5 167V178M507.5 171V175M509.5 169V175M511.5 168V171M513.5 167V170M515.5 167V170M517.5 166V169M519.5 167V170M521.5 167V170M523.5 166V169M525.5 163V167M527.5 162V167M529.5 160V164M531.5 162V165M533.5 161V164M535.5 159V164M537.5 162V165M539.5 163V166M541.5 161V164" stroke="#00ff00"/><path d="M4.5 4.5H546.5V200.5H4.5Z" stroke="#fff" fill="none"/><path d="M546 28.5h3" stroke="#fff"/><path d="M546 62.5h3" stroke="#fff"/><path d="M546 96.5h3" stroke="#fff"/><path d="M546 130.5h3" stroke="#fff"/><path d="M546 197.5h3" stroke="#fff"/><path d="M69.5 197V200" stroke="#fff"/><path d="M133.5 197V200" stroke="#fff"/><path d="M197.5 197V200" stroke="#fff"/><path d="M261.5 197V200" stroke="#fff"/><path d="M325.5 197V200" stroke="#fff"/><path d="M389.5 197V200" stroke="#fff"/><path d="M453.5 197V200" stroke="#fff"/><path d="M517.5 197V200" stroke="#fff"/><path d="M5.5 197V200" stroke="#fff"/><path d="M8 11h7l-3.5 4z" fill="#fff"/></svg>
<div class="ct" style="left:352px;top:382.27755px;font-size:9.3px">GBPUSD,M1&nbsp; 1.39081 1.39084 1.39081 1.39084</div>
<div class="ct" style="left:885px;top:398.27755px;font-size:9.3px">1.39380</div>
<div class="ct" style="left:885px;top:432.27755px;font-size:9.3px">1.39305</div>
<div class="ct" style="left:885px;top:466.27755px;font-size:9.3px">1.39230</div>
<div class="ct" style="left:885px;top:500.27755px;font-size:9.3px">1.39155</div>
<div class="ct" style="left:885px;top:567.2775499999999px;font-size:9.3px">1.39005</div>
<div style="position:absolute;left:881px;top:533px;width:38px;height:10px;background:#fff"></div>
<div class="ct" style="left:883px;top:533.2775499999999px;font-size:9.3px;color:#000">1.39084</div>
<div class="ct" style="left:337px;top:576.2775499999999px;font-size:9.3px">27 Feb 2018</div>
<div class="ct" style="left:401px;top:576.2775499999999px;font-size:9.3px">27 Feb 20:22</div>
<div class="ct" style="left:465px;top:576.2775499999999px;font-size:9.3px">27 Feb 20:54</div>
<div class="ct" style="left:529px;top:576.2775499999999px;font-size:9.3px">27 Feb 21:26</div>
<div class="ct" style="left:593px;top:576.2775499999999px;font-size:9.3px">27 Feb 21:58</div>
<div class="ct" style="left:657px;top:576.2775499999999px;font-size:9.3px">27 Feb 22:30</div>
<div class="ct" style="left:721px;top:576.2775499999999px;font-size:9.3px">27 Feb 23:02</div>
<div class="ct" style="left:785px;top:576.2775499999999px;font-size:9.3px">27 Feb 23:34</div>
<div class="ct" style="left:849px;top:576.2775499999999px;font-size:9.3px">28 Feb 00:06</div>
<div style="position:absolute;left:925px;top:352px;width:595px;height:247px;background:#d4d4d4;border-top:1px solid #d4d4d4;border-left:1px solid #d4d4d4;border-right:1px solid #404040;border-bottom:1px solid #404040;box-shadow:inset 1px 1px 0 #fff,inset -1px -1px 0 #808080"></div>
<div style="position:absolute;left:928px;top:356px;width:588px;height:18px;background:linear-gradient(90deg,#808080,#c0c0c0)"></div>
<svg style="left:931px;top:357px" width="15" height="15"><rect x="0.5" y="0.5" width="9" height="7" fill="#fff" stroke="#3a7af0" stroke-dasharray="1 1"/><rect x="4.5" y="5.5" width="9" height="8" fill="#fff" stroke="#3a7af0" stroke-dasharray="1 1"/><path d="M6 9.5l1.5 2 1.5-3 1.5 3 1.5-2" stroke="#3a7af0" fill="none" stroke-width="0.9"/><path d="M2 3.5h2l1-1.5" stroke="#3a7af0" fill="none" stroke-width="0.9"/></svg>
<div class="t" style="left:947px;top:358px;font-weight:bold;font-size:11px;letter-spacing:0.25px;line-height:16px;color:#d4d0c8">EURUSD,H1</div>
<div style="position:absolute;left:1464px;top:358px;width:16px;height:14px;background:#d4d4d4;border-top:1px solid #fff;border-left:1px solid #fff;border-right:1px solid #404040;border-bottom:1px solid #404040;box-shadow:inset -1px -1px 0 #808080"><div style="position:absolute;left:4px;top:8px;width:6px;height:2px;background:#000"></div></div>
<div style="position:absolute;left:1480px;top:358px;width:16px;height:14px;background:#d4d4d4;border-top:1px solid #fff;border-left:1px solid #fff;border-right:1px solid #404040;border-bottom:1px solid #404040;box-shadow:inset -1px -1px 0 #808080"><div style="position:absolute;left:3px;top:2px;width:9px;height:8px;border:1px solid #808080;border-top-width:2px"></div></div>
<div style="position:absolute;left:1498px;top:358px;width:16px;height:14px;background:#d4d4d4;border-top:1px solid #fff;border-left:1px solid #fff;border-right:1px solid #404040;border-bottom:1px solid #404040;box-shadow:inset -1px -1px 0 #808080"><svg style="left:3px;top:2px" width="9" height="8"><path d="M1 0.5L8 7.5M8 0.5L1 7.5" stroke="#000" stroke-width="1.4"/></svg></div>
<div style="position:absolute;left:928px;top:375px;width:588px;height:220px;background:#000;border-top:2px solid #404040;border-left:2px solid #404040;border-right:2px solid #fff;border-bottom:2px solid #fff"></div>
<div style="position:absolute;left:928px;top:375px;width:588px;height:1px;background:#808080"></div>
<div style="position:absolute;left:928px;top:375px;width:1px;height:220px;background:#808080"></div>
<svg style="left:928px;top:375px" width="588" height="220" viewBox="0 0 588 220" shape-rendering="crispEdges"><path d="M7 32.5H547" stroke="#8192a4" stroke-dasharray="3 3"/><path d="M7 65.5H547" stroke="#8192a4" stroke-dasharray="3 3"/><path d="M7 98.5H547" stroke="#8192a4" stroke-dasharray="3 3"/><path d="M7 131.5H547" stroke="#8192a4" stroke-dasharray="3 3"/><path d="M7 164.5H547" stroke="#8192a4" stroke-dasharray="3 3"/><path d="M7 197.5H547" stroke="#8192a4" stroke-dasharray="3 3"/><path d="M38.5 4V200" stroke="#8192a4" stroke-dasharray="3 3"/><path d="M70.5 4V200" stroke="#8192a4" stroke-dasharray="3 3"/><path d="M102.5 4V200" stroke="#8192a4" stroke-dasharray="3 3"/><path d="M134.5 4V200" stroke="#8192a4" stroke-dasharray="3 3"/><path d="M166.5 4V200" stroke="#8192a4" stroke-dasharray="3 3"/><path d="M198.5 4V200" stroke="#8192a4" stroke-dasharray="3 3"/><path d="M230.5 4V200" stroke="#8192a4" stroke-dasharray="3 3"/><path d="M262.5 4V200" stroke="#8192a4" stroke-dasharray="3 3"/><path d="M294.5 4V200" stroke="#8192a4" stroke-dasharray="3 3"/><path d="M326.5 4V200" stroke="#8192a4" stroke-dasharray="3 3"/><path d="M358.5 4V200" stroke="#8192a4" stroke-dasharray="3 3"/><path d="M390.5 4V200" stroke="#8192a4" stroke-dasharray="3 3"/><path d="M422.5 4V200" stroke="#8192a4" stroke-dasharray="3 3"/><path d="M454.5 4V200" stroke="#8192a4" stroke-dasharray="3 3"/><path d="M486.5 4V200" stroke="#8192a4" stroke-dasharray="3 3"/><path d="M518.5 4V200" stroke="#8192a4" stroke-dasharray="3 3"/><path d="M6 189.5H547" stroke="#8a9aab"/><path d="M6.5 157V165M8.5 154V161M10.5 152V160M12.5 156V162M14.5 158V161M16.5 150V160M18.5 150V160M20.5 152V163M22.5 155V162M24.5 155V160M26.5 150V159M28.5 146V157M30.5 142V151M32.5 136V150M34.5 133V147M36.5 131V145M38.5 126V144M40.5 125V132M42.5 128V132M44.5 124V139M46.5 116V130M48.5 115V127M50.5 114V126M52.5 117V125M54.5 117V128M56.5 119V129M58.5 117V127M60.5 121V127M62.5 121V127M64.5 122V127M66.5 119V128M68.5 119V126M70.5 113V123M72.5 102V120M74.5 104V115M76.5 104V114M78.5 105V116M80.5 105V118M82.5 107V121M84.5 113V126M86.5 117V126M88.5 123V130M90.5 121V133M92.5 124V161M94.5 131V151M96.5 108V143M98.5 90V121M100.5 88V103M102.5 83V100M104.5 74V86M106.5 64V80M108.5 67V73M110.5 62V71M112.5 60V71M114.5 61V70M116.5 58V71M118.5 59V72M120.5 61V70M122.5 62V69M124.5 62V68M126.5 58V67M128.5 48V63M130.5 40V59M132.5 44V57M134.5 43V61M136.5 46V63M138.5 48V66M140.5 44V63M142.5 43V64M144.5 44V62M146.5 46V65M148.5 49V69M150.5 47V60M152.5 41V55M154.5 41V50M156.5 40V48M158.5 42V48M160.5 42V47M162.5 41V47M164.5 38V47M166.5 30V42M168.5 24V36M170.5 21V27M172.5 17V26M174.5 20V28M176.5 19V32M178.5 22V32M180.5 23V34M182.5 27V48M184.5 46V56M186.5 53V63M188.5 60V70M190.5 66V77M192.5 66V81M194.5 67V80M196.5 76V84M198.5 76V94M200.5 85V100M202.5 90V98M204.5 93V98M206.5 89V97M208.5 89V95M210.5 84V93M212.5 83V87M214.5 80V87M216.5 84V91M218.5 86V93M220.5 89V96M222.5 88V97M224.5 90V102M226.5 88V105M228.5 89V101M230.5 89V99M232.5 83V97M234.5 85V101M236.5 91V116M238.5 101V114M240.5 100V112M242.5 96V108M244.5 93V99M246.5 90V97M248.5 92V97M250.5 93V96M252.5 93V98M254.5 93V99M256.5 94V101M258.5 96V103M260.5 98V109M262.5 101V111M264.5 102V111M266.5 103V111M268.5 100V109M270.5 103V109M272.5 108V117M274.5 113V128M276.5 118V130M278.5 124V133M280.5 126V133M282.5 125V135M284.5 124V143M286.5 123V141M288.5 120V136M290.5 122V137M292.5 123V138M294.5 127V136M296.5 131V135M298.5 131V136M300.5 132V136M302.5 132V137M304.5 131V138M306.5 131V137M308.5 130V137M310.5 129V137M312.5 132V140M314.5 136V144M316.5 136V144M318.5 134V143M320.5 133V148M322.5 134V149M324.5 134V148M326.5 133V145M328.5 136V146M330.5 140V152M332.5 141V155M334.5 136V145M336.5 132V147M338.5 139V152M340.5 139V148M342.5 137V145M344.5 123V153M346.5 143V162M348.5 152V161M350.5 158V167M352.5 160V167M354.5 163V171M356.5 163V170M358.5 161V167M360.5 161V166M362.5 163V167M364.5 162V170M366.5 163V174M368.5 164V176M370.5 161V173M372.5 157V168M374.5 154V165M376.5 156V164M378.5 150V168M380.5 146V172M382.5 135V152M384.5 127V144M386.5 132V146M388.5 132V141M390.5 130V142M392.5 131V142M394.5 133V144M396.5 134V140M398.5 135V142M400.5 132V140M402.5 136V141M404.5 136V143M406.5 140V147M408.5 145V153M410.5 146V156M412.5 150V156M414.5 147V159M416.5 154V163M418.5 144V154M420.5 142V149M422.5 143V152M424.5 148V160M426.5 146V159M428.5 149V158M430.5 150V162M432.5 146V157M434.5 146V161M436.5 148V159M438.5 150V157M440.5 152V160M442.5 150V157M444.5 153V159M446.5 154V161M448.5 156V165M450.5 156V163M452.5 153V162M454.5 144V154M456.5 144V151M458.5 145V148M460.5 140V147M462.5 135V144M464.5 134V146M466.5 135V145M468.5 127V139M470.5 124V133M472.5 126V136M474.5 132V141M476.5 136V149M478.5 144V155M480.5 149V163M482.5 143V163M484.5 147V159M486.5 147V154M488.5 146V153M490.5 144V151M492.5 142V149M494.5 141V147M496.5 143V149M498.5 135V148M500.5 132V142M502.5 130V134M504.5 131V141M506.5 137V143M508.5 137V140M510.5 135V142M512.5 131V141M514.5 128V141M516.5 129V140M518.5 131V142M520.5 136V147M522.5 138V147M524.5 141V157M526.5 148V167M528.5 160V186M530.5 174V193M532.5 179V195M534.5 178V188M536.5 182V188M538.5 183V193M540.5 189V194M542.5 189V192" stroke="#00ff00"/><path d="M5.5 4.5H547.5V200.5H5.5Z" stroke="#fff" fill="none"/><path d="M547 32.5h3" stroke="#fff"/><path d="M547 65.5h3" stroke="#fff"/><path d="M547 98.5h3" stroke="#fff"/><path d="M547 131.5h3" stroke="#fff"/><path d="M547 164.5h3" stroke="#fff"/><path d="M547 197.5h3" stroke="#fff"/><path d="M70.5 197V200" stroke="#fff"/><path d="M134.5 197V200" stroke="#fff"/><path d="M198.5 197V200" stroke="#fff"/><path d="M262.5 197V200" stroke="#fff"/><path d="M326.5 197V200" stroke="#fff"/><path d="M390.5 197V200" stroke="#fff"/><path d="M454.5 197V200" stroke="#fff"/><path d="M518.5 197V200" stroke="#fff"/><path d="M6.5 197V200" stroke="#fff"/><path d="M9 11h7l-3.5 4z" fill="#fff"/></svg>
<div class="ct" style="left:948px;top:382.27755px;font-size:9.3px">EURUSD,H1&nbsp; 1.22319 1.22344 1.22316 1.22331</div>
<div class="ct" style="left:1481px;top:402.27755px;font-size:9.3px">1.25235</div>
<div class="ct" style="left:1481px;top:435.27755px;font-size:9.3px">1.24620</div>
<div class="ct" style="left:1481px;top:468.27755px;font-size:9.3px">1.24005</div>
<div class="ct" style="left:1481px;top:501.27755px;font-size:9.3px">1.23405</div>
<div class="ct" style="left:1481px;top:534.2775499999999px;font-size:9.3px">1.22790</div>
<div class="ct" style="left:1481px;top:567.2775499999999px;font-size:9.3px">1.22175</div>
<div style="position:absolute;left:1477px;top:559px;width:38px;height:10px;background:#fff"></div>
<div class="ct" style="left:1479px;top:559.2775499999999px;font-size:9.3px;color:#000">1.22331</div>
<div class="ct" style="left:933px;top:576.2775499999999px;font-size:9.3px">12 Feb 2018</div>
<div class="ct" style="left:997px;top:576.2775499999999px;font-size:9.3px">14 Feb 04:00</div>
<div class="ct" style="left:1061px;top:576.2775499999999px;font-size:9.3px">15 Feb 12:00</div>
<div class="ct" style="left:1125px;top:576.2775499999999px;font-size:9.3px">16 Feb 20:00</div>
<div class="ct" style="left:1189px;top:576.2775499999999px;font-size:9.3px">20 Feb 04:00</div>
<div class="ct" style="left:1253px;top:576.2775499999999px;font-size:9.3px">21 Feb 12:00</div>
<div class="ct" style="left:1317px;top:576.2775499999999px;font-size:9.3px">22 Feb 20:00</div>
<div class="ct" style="left:1381px;top:576.2775499999999px;font-size:9.3px">26 Feb 04:00</div>
<div class="ct" style="left:1445px;top:576.2775499999999px;font-size:9.3px">27 Feb 12:00</div>
<div style="position:absolute;left:327px;top:601px;width:1196px;height:1px;background:#fff"></div>
<div style="position:absolute;left:327px;top:602px;width:1196px;height:1px;background:#404040"></div>
<div style="position:absolute;left:328px;top:602px;width:1px;height:19px;background:#404040"></div>
<div style="position:absolute;left:333px;top:602px;width:76px;height:19px;background:#fff;border-left:1px solid #000;border-right:1px solid #000;border-bottom:1px solid #000"></div>
<div class="t" style="left:343px;top:605px;">XTIUSD,M1</div>
<div class="t" style="left:419px;top:605px;color:#404040">GBPUSD,M1</div>
<div style="position:absolute;left:489px;top:606px;width:1px;height:13px;background:#404040"></div>
<div class="t" style="left:499px;top:605px;color:#404040">AUDUSD,M1</div>
<div style="position:absolute;left:569px;top:606px;width:1px;height:13px;background:#404040"></div>
<div class="t" style="left:580px;top:605px;color:#404040">EURUSD,H1</div>
<div style="position:absolute;left:649px;top:606px;width:1px;height:13px;background:#404040"></div>
<svg style="left:1489px;top:607px" width="30" height="9"><path d="M5.5 0.5v7l-3.5-3.5z" fill="#a8a8a8"/><path d="M22 0.5v7l3.5-3.5z" fill="#a8a8a8"/></svg>
<div style="position:absolute;left:16px;top:618px;width:312px;height:1px;background:#fff"></div>
<div style="position:absolute;left:16px;top:621px;width:312px;height:1px;background:#808080"></div>
<div style="position:absolute;left:16px;top:622px;width:1507px;height:1px;background:#fff"></div>
<svg style="left:21px;top:629px" width="7" height="7"><path d="M1 1L6 6M6 1L1 6" stroke="#000" stroke-width="1.5"/></svg>
<div style="position:absolute;left:17px;top:640px;width:13px;height:115px;background:linear-gradient(#a6caf0,#0a246a)"></div>
<div class="t" style="left:17px;top:755px;width:13px;transform-origin:0 0;transform:rotate(-90deg);color:#fff;font-size:11px;line-height:13px;padding-left:2px">Terminal</div>
<div style="position:absolute;left:30px;top:626px;width:1490px;height:109px;background:#fff;border-top:1px solid #808080;border-left:1px solid #808080"></div>
<div style="position:absolute;left:31px;top:627px;width:817px;height:16px;background:#d4d4d4;border-left:1px solid #fff;border-right:1px solid #808080;border-bottom:1px solid #808080"></div>
<div class="t" style="left:38px;top:629px;color:#1a0a0a">Headline</div>
<div style="position:absolute;left:848px;top:627px;width:523px;height:16px;background:#d4d4d4;border-left:1px solid #fff;border-right:1px solid #808080;border-bottom:1px solid #808080"></div>
<div class="t" style="left:855px;top:629px;color:#1a0a0a">From</div>
<div style="position:absolute;left:1371px;top:627px;width:132px;height:16px;background:#d4d4d4;border-left:1px solid #fff;border-right:1px solid #808080;border-bottom:1px solid #808080"></div>
<div class="t" style="left:1371px;top:629px;width:123px;text-align:right;color:#1a0a0a">Time</div>
<div style="position:absolute;left:31px;top:644px;width:1472px;height:90px;overflow:hidden">
<div style="position:absolute;left:0;top:0px;width:1472px;height:20px;background:#ebebeb;border-bottom:1px solid #d8d8d8"></div>
<div style="position:absolute;left:816px;top:0px;width:1px;height:20px;background:#d8d8d8"></div>
<div style="position:absolute;left:1339px;top:0px;width:1px;height:20px;background:#d8d8d8"></div>
<svg style="left:3px;top:6px" width="13" height="10"><rect x="0.5" y="0.5" width="12" height="8.5" rx="1" fill="#fbe9b0" stroke="#9a8a3a"/><path d="M1 1.5l5.5 4 5.5-4" stroke="#9a8a3a" fill="none"/></svg>
<div class="t" style="left:22px;top:5px;font-weight:bold;font-size:11.8px">New Account Registration</div>
<div class="t" style="left:821px;top:5px;font-weight:bold;font-size:11.8px">Pepperstone Group Limited</div>
<div class="t" style="left:1340px;top:4px;width:127px;text-align:right;font-weight:bold;font-size:11.8px">2018.02.28 00:14</div>
<div style="position:absolute;left:0;top:20px;width:1472px;height:20px;background:#fff;border-bottom:1px solid #d8d8d8"></div>
<div style="position:absolute;left:816px;top:20px;width:1px;height:20px;background:#d8d8d8"></div>
<div style="position:absolute;left:1339px;top:20px;width:1px;height:20px;background:#d8d8d8"></div>
<svg style="left:3px;top:26px" width="13" height="10"><rect x="0.5" y="0.5" width="12" height="8.5" rx="1" fill="#fbe9b0" stroke="#9a8a3a"/><path d="M1 1.5l5.5 4 5.5-4" stroke="#9a8a3a" fill="none"/></svg>
<div class="t" style="left:22px;top:25px;font-weight:bold;font-size:11.8px">Welcome!</div>
<div class="t" style="left:821px;top:25px;font-weight:bold;font-size:11.8px">Pepperstone Group Limited</div>
<div class="t" style="left:1340px;top:24px;width:127px;text-align:right;font-weight:bold;font-size:11.8px">2017.10.12 11:34</div>
<div style="position:absolute;left:0;top:40px;width:1472px;height:20px;background:#ebebeb;border-bottom:1px solid #d8d8d8"></div>
<div style="position:absolute;left:816px;top:40px;width:1px;height:20px;background:#d8d8d8"></div>
<div style="position:absolute;left:1339px;top:40px;width:1px;height:20px;background:#d8d8d8"></div>
<svg style="left:3px;top:46px" width="13" height="10"><rect x="0.5" y="0.5" width="12" height="8.5" rx="1" fill="#fbe9b0" stroke="#9a8a3a"/><path d="M1 1.5l5.5 4 5.5-4" stroke="#9a8a3a" fill="none"/></svg>
<div class="t" style="left:22px;top:45px;font-weight:bold;font-size:11.8px">The Built-in Virtual Hosting — Robots and Signals Now Working 24/7</div>
<div class="t" style="left:821px;top:45px;font-weight:bold;font-size:11.8px">Pepperstone Group Limited</div>
<div class="t" style="left:1340px;top:44px;width:127px;text-align:right;font-weight:bold;font-size:11.8px">2017.10.12 11:34</div>
<div style="position:absolute;left:0;top:60px;width:1472px;height:20px;background:#fff;border-bottom:1px solid #d8d8d8"></div>
<div style="position:absolute;left:816px;top:60px;width:1px;height:20px;background:#d8d8d8"></div>
<div style="position:absolute;left:1339px;top:60px;width:1px;height:20px;background:#d8d8d8"></div>
<svg style="left:3px;top:66px" width="13" height="10"><rect x="0.5" y="0.5" width="12" height="8.5" rx="1" fill="#fbe9b0" stroke="#9a8a3a"/><path d="M1 1.5l5.5 4 5.5-4" stroke="#9a8a3a" fill="none"/></svg>
<div class="t" style="left:22px;top:65px;font-weight:bold;font-size:11.8px">Trading Signals and Copy Trading</div>
<div class="t" style="left:821px;top:65px;font-weight:bold;font-size:11.8px">Pepperstone Group Limited</div>
<div class="t" style="left:1340px;top:64px;width:127px;text-align:right;font-weight:bold;font-size:11.8px">2017.10.12 11:34</div>
<div style="position:absolute;left:0;top:80px;width:1472px;height:20px;background:#ebebeb;border-bottom:1px solid #d8d8d8"></div>
<div style="position:absolute;left:816px;top:80px;width:1px;height:20px;background:#d8d8d8"></div>
<div style="position:absolute;left:1339px;top:80px;width:1px;height:20px;background:#d8d8d8"></div>
<svg style="left:3px;top:86px" width="13" height="10"><rect x="0.5" y="0.5" width="12" height="8.5" rx="1" fill="#fbe9b0" stroke="#9a8a3a"/><path d="M1 1.5l5.5 4 5.5-4" stroke="#9a8a3a" fill="none"/></svg>
<div class="t" style="left:22px;top:85px;font-weight:bold;font-size:11.8px">Mobile Trading — Trade from Anywhere at Any Time!</div>
<div class="t" style="left:821px;top:85px;font-weight:bold;font-size:11.8px">Pepperstone Group Limited</div>
<div class="t" style="left:1340px;top:84px;width:127px;text-align:right;font-weight:bold;font-size:11.8px">2017.10.12 11:34</div>
</div>
<div style="position:absolute;left:1503px;top:627px;width:16px;height:107px;background-color:#e8e8e8;background-image:repeating-conic-gradient(#fff 0 25%,#d4d4d4 0 50%);background-size:2px 2px"></div>
<div style="position:absolute;left:1503px;top:627px;width:16px;height:16px;background:#d4d4d4;border-top:1px solid #fff;border-left:1px solid #fff;border-right:1px solid #404040;border-bottom:1px solid #404040;box-shadow:inset -1px -1px 0 #808080"></div>
<svg style="left:1507px;top:633px" width="8" height="5"><path d="M3.5 0L7 4H0Z" fill="#000"/></svg>
<div style="position:absolute;left:1503px;top:643px;width:16px;height:42px;background:#d4d4d4;border-top:1px solid #fff;border-left:1px solid #fff;border-right:1px solid #404040;border-bottom:1px solid #404040;box-shadow:inset -1px -1px 0 #808080"></div>
<div style="position:absolute;left:1503px;top:718px;width:16px;height:16px;background:#d4d4d4;border-top:1px solid #fff;border-left:1px solid #fff;border-right:1px solid #404040;border-bottom:1px solid #404040;box-shadow:inset -1px -1px 0 #808080"></div>
<svg style="left:1507px;top:724px" width="8" height="5"><path d="M0 0H7L3.5 4Z" fill="#000"/></svg>
<div style="position:absolute;left:30px;top:734px;width:1490px;height:1px;background:#000"></div>
<div style="position:absolute;left:30px;top:735px;width:1px;height:19px;background:#808080"></div>
<div style="position:absolute;left:337px;top:734px;width:63px;height:18px;background:#fff;border:1px solid #000;border-top:none"></div>
<div class="t" style="left:44px;top:737px;color:#404040">Trade</div>
<div class="t" style="left:91px;top:737px;color:#404040">Exposure</div>
<div class="t" style="left:157px;top:737px;color:#404040">Account History</div>
<div class="t" style="left:252px;top:737px;color:#404040">News</div>
<div class="t" style="left:299px;top:737px;color:#404040">Alerts</div>
<div class="t" style="left:409px;top:737px;color:#404040">Code Base</div>
<div class="t" style="left:480px;top:737px;color:#404040">Experts</div>
<div class="t" style="left:537px;top:737px;color:#404040">Journal</div>
<div style="position:absolute;left:83px;top:737px;width:1px;height:13px;background:#404040"></div>
<div style="position:absolute;left:147px;top:737px;width:1px;height:13px;background:#404040"></div>
<div style="position:absolute;left:244px;top:737px;width:1px;height:13px;background:#404040"></div>
<div style="position:absolute;left:289px;top:737px;width:1px;height:13px;background:#404040"></div>
<div style="position:absolute;left:471px;top:737px;width:1px;height:13px;background:#404040"></div>
<div style="position:absolute;left:528px;top:737px;width:1px;height:13px;background:#404040"></div>
<div style="position:absolute;left:584px;top:737px;width:1px;height:13px;background:#404040"></div>
<div class="t" style="left:346px;top:737px;">Mailbox</div>
<div class="t" style="left:386px;top:741px;color:#ff0000;font-size:7.5px;font-style:italic;font-weight:bold">7</div>
<div style="position:absolute;left:16px;top:755px;width:1507px;height:1px;background:#fff"></div>
<div style="position:absolute;left:16px;top:757px;width:1507px;height:1px;background:#808080"></div>
<div style="position:absolute;left:16px;top:758px;width:1507px;height:1px;background:#fff"></div>
<div class="t" style="left:18px;top:766px;font-size:11px">For Help, press F1</div>
<div style="position:absolute;left:825px;top:761px;width:1px;height:19px;background:#a0a0a0;box-shadow:1px 0 0 #fff"></div>
<div style="position:absolute;left:935px;top:761px;width:1px;height:19px;background:#a0a0a0;box-shadow:1px 0 0 #fff"></div>
<div style="position:absolute;left:1035px;top:761px;width:1px;height:19px;background:#a0a0a0;box-shadow:1px 0 0 #fff"></div>
<div style="position:absolute;left:1318px;top:761px;width:1px;height:19px;background:#a0a0a0;box-shadow:1px 0 0 #fff"></div>
<div style="position:absolute;left:1384px;top:761px;width:1px;height:19px;background:#a0a0a0;box-shadow:1px 0 0 #fff"></div>
<div class="t" style="left:831px;top:766px;">Default</div>
<svg style="left:1390px;top:764px" width="24" height="13"><rect x="0.0" y="5.0" width="1.5" height="2.0" fill="#5a8a10"/><rect x="0.0" y="7" width="1.5" height="6" fill="#c01010"/><rect x="2.4" y="4.5" width="1.5" height="2.5" fill="#5a8a10"/><rect x="2.4" y="7" width="1.5" height="6" fill="#c01010"/><rect x="4.8" y="4.0" width="1.5" height="3.0" fill="#5a8a10"/><rect x="4.8" y="7" width="1.5" height="6" fill="#c01010"/><rect x="7.2" y="3.5" width="1.5" height="3.5" fill="#5a8a10"/><rect x="7.2" y="7" width="1.5" height="6" fill="#c01010"/><rect x="9.6" y="3.0" width="1.5" height="4.0" fill="#5a8a10"/><rect x="9.6" y="7" width="1.5" height="6" fill="#c01010"/><rect x="12.0" y="2.5" width="1.5" height="4.5" fill="#5a8a10"/><rect x="12.0" y="7" width="1.5" height="6" fill="#c01010"/><rect x="14.4" y="2.0" width="1.5" height="5.0" fill="#5a8a10"/><rect x="14.4" y="7" width="1.5" height="6" fill="#c01010"/><rect x="16.8" y="1.5" width="1.5" height="5.5" fill="#5a8a10"/><rect x="16.8" y="7" width="1.5" height="6" fill="#c01010"/><rect x="19.2" y="1.0" width="1.5" height="6.0" fill="#5a8a10"/><rect x="19.2" y="7" width="1.5" height="6" fill="#c01010"/><rect x="21.6" y="0.5" width="1.5" height="6.5" fill="#5a8a10"/><rect x="21.6" y="7" width="1.5" height="6" fill="#c01010"/></svg>
<div class="t" style="left:1416px;top:766px;">257/2 kb</div>
<svg style="left:1508px;top:766px" width="15" height="15"><rect width="15" height="15" fill="#fff"/><path d="M14 2L2 14M14 6L6 14M14 10L10 14" stroke="#a0a0a0"/></svg></body></html>
